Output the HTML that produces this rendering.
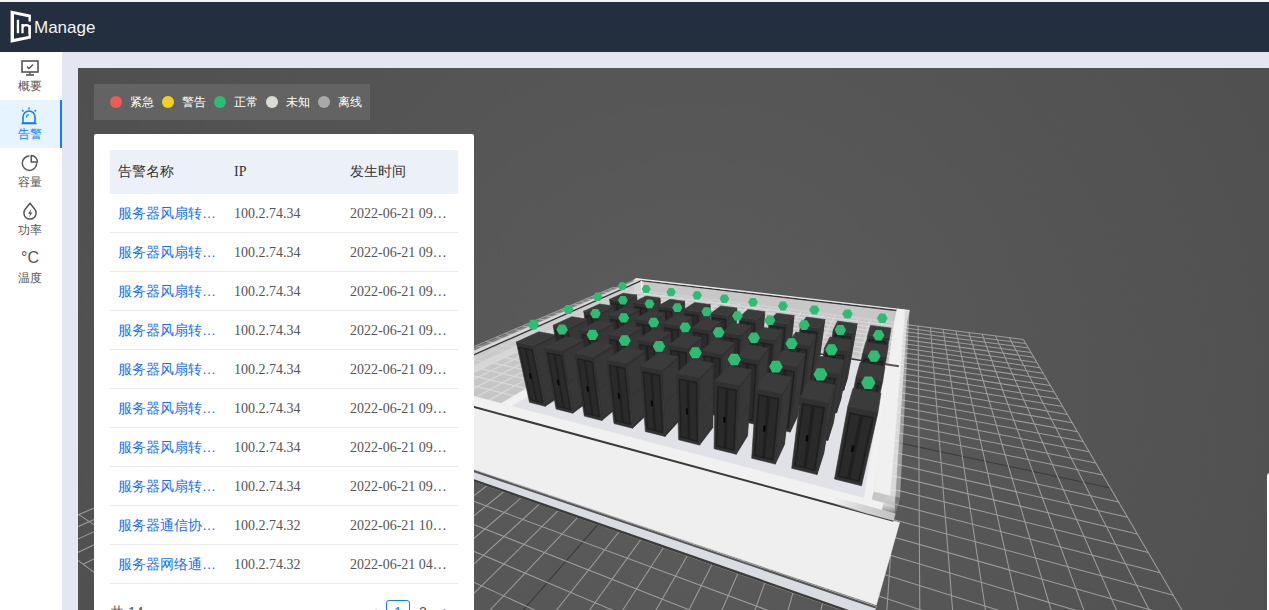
<!DOCTYPE html>
<html><head><meta charset="utf-8">
<style>
*{box-sizing:border-box;margin:0;padding:0}
html,body{width:1269px;height:610px;overflow:hidden;background:#e4e6f1;font-family:"Liberation Sans",sans-serif}
#topline{position:absolute;left:0;top:0;width:1269px;height:2px;background:#f4f4f4}
#header{position:absolute;left:0;top:2px;width:1269px;height:50px;background:#232e3e}
#side{position:absolute;left:0;top:52px;width:62px;height:558px;background:#fff}
.nav{position:absolute;left:0;width:62px;height:48px;color:#555;font-size:12px;text-align:center}
.nav.active{background:#e6f4ff;color:#1677ff}
.nav.active:after{content:"";position:absolute;right:0;top:0;width:2px;height:48px;background:#1677ff}
.nav svg{position:absolute;left:20px;top:8px}
.nav span{position:absolute;left:0;width:60px;top:26px;line-height:16px}
#scene{position:absolute;left:78px;top:68px;width:1191px;height:542px;overflow:hidden;background:#555}
#legend{position:absolute;left:94px;top:84px;width:276px;height:36px;background:#626362;color:#fff;font-size:12px}
.lg{position:absolute;top:0;height:36px;line-height:36px}
.dot{position:absolute;top:12px;width:12px;height:12px;border-radius:6px}
#panel{position:absolute;left:94px;top:134px;width:380px;height:500px;background:#fff;border-radius:2px}
table{position:absolute;left:16px;top:16px;width:348px;border-collapse:separate;border-spacing:0;table-layout:fixed}
th{height:44px;background:#ecf0f8;font-weight:normal;text-align:left;padding:0 8px;font-size:14px;color:#333;font-family:"Liberation Serif",serif}
td{height:39px;border-bottom:1px solid #ebebeb;padding:2px 8px 0;font-size:14px;color:#555;font-family:"Liberation Serif",serif;white-space:nowrap;overflow:hidden;text-overflow:ellipsis}
td.l{color:#1a6ff0;font-family:"Liberation Sans",sans-serif}
#pager{position:absolute;left:16px;top:466px;width:348px;height:24px;font-size:14px;color:#555}
</style></head><body>
<div id="topline"></div>
<div id="header">
 <svg width="40" height="50" style="position:absolute;left:0;top:-2px" viewBox="0 0 40 50">
  <path fill="#fff" fill-rule="evenodd" d="M10.6 10.6 L30.9 14.8 L30.9 38.4 L10.6 42.7 Z M14 14.3 L28.5 17.3 L28.5 35.9 L14 38.8 Z"/>
  <rect x="28" y="21.6" width="3.5" height="3.6" fill="#232e3e"/>
  <rect x="16.8" y="19.8" width="2.3" height="13.4" fill="#fff"/>
  <path d="M22.5 33.2 V24 M22.5 28.2 Q22.5 25.1 25.9 25.1 Q29.7 25.1 29.7 28.6 V34" fill="none" stroke="#fff" stroke-width="2.3"/>
 </svg>
 <div style="position:absolute;left:34px;top:16px;font-size:17px;line-height:20px;color:#f4f4f4;white-space:nowrap">Manage</div>
</div>
<div id="side">
 <div class="nav" style="top:0">
  <svg width="20" height="18" viewBox="0 0 20 18"><rect x="2" y="1" width="16" height="11" fill="none" stroke="#555" stroke-width="1.6"/><path d="M7 6.5 L9 8.5 L13 4.5" fill="none" stroke="#555" stroke-width="1.4"/><path d="M6 15 H14" stroke="#555" stroke-width="1.6"/><path d="M10 12 V15" stroke="#555" stroke-width="1.4"/></svg>
  <span>概要</span></div>
 <div class="nav active" style="top:48px">
  <svg width="20" height="18" viewBox="0 0 20 18" style="left:19px;top:6.5px"><path d="M4 16 V10 A6 6 0 0 1 16 10 V16 Z" fill="none" stroke="#1677ff" stroke-width="1.6"/><path d="M2.5 16.5 H17.5" stroke="#1677ff" stroke-width="1.6"/><path d="M10 0.5 V2.5 M3 3 L4.5 4.5 M17 3 L15.5 4.5" stroke="#1677ff" stroke-width="1.4"/><path d="M7.5 10.5 A3 3 0 0 1 10 7.5" fill="none" stroke="#1677ff" stroke-width="1.2"/></svg>
  <span>告警</span></div>
 <div class="nav" style="top:96px">
  <svg width="20" height="20" viewBox="0 0 20 20" style="left:20px;top:5px"><path d="M9.5 3 A7.2 7.2 0 1 0 16.7 10.2" fill="none" stroke="#555" stroke-width="1.5"/><path d="M11.2 2.6 A6.3 6.3 0 0 1 17.5 8.9 H11.2 Z" fill="none" stroke="#555" stroke-width="1.5" stroke-linejoin="round"/></svg>
  <span>容量</span></div>
 <div class="nav" style="top:144px">
  <svg width="20" height="20" viewBox="0 0 20 20" style="left:20px;top:5px"><path d="M10 2.2 L14.6 8 A6.1 6.1 0 1 1 5.4 8 Z" fill="none" stroke="#555" stroke-width="1.5" stroke-linejoin="round"/><path d="M11.3 8 L8 12.8 H10.1 L9.1 16.2 L12.4 11.4 H10.3 Z" fill="#555"/></svg>
  <span>功率</span></div>
 <div class="nav" style="top:192px">
  <div style="position:absolute;left:0;width:60px;top:5px;font-size:16px;line-height:18px;color:#555">°C</div>
  <span>温度</span></div>
</div>
<div id="scene"><svg id="s3d" width="1191" height="542" viewBox="78 68 1191 542" style="position:absolute;left:0;top:0"><defs><radialGradient id="bg" cx="690" cy="400" r="700" gradientUnits="userSpaceOnUse"><stop offset="0" stop-color="#5c5c5c"/><stop offset="1" stop-color="#4f4f4f"/></radialGradient><linearGradient id="endg" x1="0" y1="0" x2="0" y2="1"><stop offset="0" stop-color="#ffffff" stop-opacity="0"/><stop offset="1" stop-color="#6a6a6a" stop-opacity="0.85"/></linearGradient><linearGradient id="endh" x1="0" y1="0" x2="1" y2="0"><stop offset="0" stop-color="#d4d4d4" stop-opacity="0"/><stop offset="0.5" stop-color="#d2d2d2"/><stop offset="1" stop-color="#c2c2c2"/></linearGradient></defs><rect x="78" y="68" width="1191" height="542" fill="url(#bg)"/><line x1="612.9" y1="287.5" x2="39.2" y2="531.4" stroke="#9c9c9c" stroke-width="1.05" /><line x1="612.9" y1="287.5" x2="1023.4" y2="339.4" stroke="#9c9c9c" stroke-width="1.05" /><line x1="620.4" y1="288.5" x2="49.5" y2="539.1" stroke="#9c9c9c" stroke-width="1.05" /><line x1="607.9" y1="289.7" x2="1025.8" y2="343.6" stroke="#9c9c9c" stroke-width="1.05" /><line x1="628.0" y1="289.4" x2="60.2" y2="547.1" stroke="#9c9c9c" stroke-width="1.05" /><line x1="602.7" y1="291.9" x2="1028.4" y2="347.9" stroke="#9c9c9c" stroke-width="1.05" /><line x1="635.7" y1="290.4" x2="71.4" y2="555.4" stroke="#9c9c9c" stroke-width="1.05" /><line x1="597.3" y1="294.2" x2="1031.1" y2="352.5" stroke="#9c9c9c" stroke-width="1.05" /><line x1="643.6" y1="291.4" x2="83.1" y2="564.2" stroke="#9c9c9c" stroke-width="1.05" /><line x1="591.7" y1="296.6" x2="1033.9" y2="357.3" stroke="#9c9c9c" stroke-width="1.05" /><line x1="651.5" y1="292.4" x2="95.3" y2="573.2" stroke="#9c9c9c" stroke-width="1.05" /><line x1="585.9" y1="299.0" x2="1036.8" y2="362.4" stroke="#9c9c9c" stroke-width="1.05" /><line x1="659.5" y1="293.4" x2="108.0" y2="582.8" stroke="#9c9c9c" stroke-width="1.05" /><line x1="579.9" y1="301.6" x2="1040.0" y2="367.7" stroke="#9c9c9c" stroke-width="1.05" /><line x1="667.7" y1="294.4" x2="121.4" y2="592.7" stroke="#9c9c9c" stroke-width="1.05" /><line x1="573.6" y1="304.2" x2="1043.2" y2="373.3" stroke="#9c9c9c" stroke-width="1.05" /><line x1="675.9" y1="295.5" x2="135.3" y2="603.1" stroke="#9c9c9c" stroke-width="1.05" /><line x1="567.2" y1="307.0" x2="1046.7" y2="379.2" stroke="#9c9c9c" stroke-width="1.05" /><line x1="684.3" y1="296.5" x2="149.9" y2="614.0" stroke="#9c9c9c" stroke-width="1.05" /><line x1="560.5" y1="309.8" x2="1050.4" y2="385.5" stroke="#9c9c9c" stroke-width="1.05" /><line x1="692.9" y1="297.6" x2="165.3" y2="625.5" stroke="#9c9c9c" stroke-width="1.05" /><line x1="553.5" y1="312.8" x2="1054.2" y2="392.1" stroke="#9c9c9c" stroke-width="1.05" /><line x1="701.5" y1="298.7" x2="181.4" y2="637.5" stroke="#9c9c9c" stroke-width="1.05" /><line x1="546.3" y1="315.9" x2="1058.3" y2="399.1" stroke="#9c9c9c" stroke-width="1.05" /><line x1="710.3" y1="299.8" x2="198.4" y2="650.1" stroke="#9c9c9c" stroke-width="1.05" /><line x1="538.7" y1="319.1" x2="1062.7" y2="406.5" stroke="#9c9c9c" stroke-width="1.05" /><line x1="719.2" y1="301.0" x2="216.2" y2="663.5" stroke="#9c9c9c" stroke-width="1.05" /><line x1="530.9" y1="322.4" x2="1067.3" y2="414.4" stroke="#9c9c9c" stroke-width="1.05" /><line x1="728.2" y1="302.1" x2="235.1" y2="677.5" stroke="#9c9c9c" stroke-width="1.05" /><line x1="522.7" y1="325.9" x2="1072.2" y2="422.8" stroke="#9c9c9c" stroke-width="1.05" /><line x1="737.4" y1="303.3" x2="255.0" y2="692.4" stroke="#9c9c9c" stroke-width="1.05" /><line x1="514.2" y1="329.5" x2="1077.5" y2="431.8" stroke="#9c9c9c" stroke-width="1.05" /><line x1="746.7" y1="304.4" x2="276.1" y2="708.1" stroke="#9c9c9c" stroke-width="1.05" /><line x1="505.2" y1="333.3" x2="1083.2" y2="441.5" stroke="#9c9c9c" stroke-width="1.05" /><line x1="756.2" y1="305.6" x2="298.4" y2="724.7" stroke="#9c9c9c" stroke-width="1.05" /><line x1="495.9" y1="337.3" x2="1089.2" y2="451.8" stroke="#9c9c9c" stroke-width="1.05" /><line x1="765.8" y1="306.8" x2="322.1" y2="742.4" stroke="#9c9c9c" stroke-width="1.05" /><line x1="486.2" y1="341.4" x2="1095.7" y2="462.9" stroke="#9c9c9c" stroke-width="1.05" /><line x1="775.6" y1="308.1" x2="347.3" y2="761.2" stroke="#9c9c9c" stroke-width="1.05" /><line x1="476.0" y1="345.7" x2="1102.7" y2="474.9" stroke="#9c9c9c" stroke-width="1.05" /><line x1="785.5" y1="309.3" x2="374.1" y2="781.2" stroke="#3a3a3a" stroke-width="1.05" /><line x1="465.3" y1="350.3" x2="1110.3" y2="487.9" stroke="#3a3a3a" stroke-width="1.05" /><line x1="795.6" y1="310.6" x2="402.8" y2="802.6" stroke="#9c9c9c" stroke-width="1.05" /><line x1="454.0" y1="355.1" x2="1118.6" y2="502.0" stroke="#9c9c9c" stroke-width="1.05" /><line x1="805.8" y1="311.9" x2="433.5" y2="825.5" stroke="#9c9c9c" stroke-width="1.05" /><line x1="442.2" y1="360.1" x2="1127.6" y2="517.3" stroke="#9c9c9c" stroke-width="1.05" /><line x1="816.2" y1="313.2" x2="466.4" y2="850.1" stroke="#9c9c9c" stroke-width="1.05" /><line x1="429.8" y1="365.4" x2="1137.4" y2="534.1" stroke="#9c9c9c" stroke-width="1.05" /><line x1="826.8" y1="314.6" x2="501.8" y2="876.5" stroke="#9c9c9c" stroke-width="1.05" /><line x1="416.7" y1="370.9" x2="1148.2" y2="552.5" stroke="#9c9c9c" stroke-width="1.05" /><line x1="837.6" y1="315.9" x2="540.0" y2="905.0" stroke="#9c9c9c" stroke-width="1.05" /><line x1="402.9" y1="376.8" x2="1160.1" y2="572.8" stroke="#9c9c9c" stroke-width="1.05" /><line x1="848.5" y1="317.3" x2="581.3" y2="935.8" stroke="#9c9c9c" stroke-width="1.05" /><line x1="388.2" y1="383.0" x2="1173.3" y2="595.3" stroke="#9c9c9c" stroke-width="1.05" /><line x1="859.6" y1="318.7" x2="626.1" y2="969.2" stroke="#9c9c9c" stroke-width="1.05" /><line x1="372.8" y1="389.6" x2="1188.0" y2="620.5" stroke="#9c9c9c" stroke-width="1.05" /><line x1="871.0" y1="320.1" x2="675.0" y2="1005.6" stroke="#9c9c9c" stroke-width="1.05" /><line x1="356.4" y1="396.6" x2="1204.5" y2="648.6" stroke="#9c9c9c" stroke-width="1.05" /><line x1="882.5" y1="321.6" x2="728.3" y2="1045.4" stroke="#9c9c9c" stroke-width="1.05" /><line x1="339.0" y1="404.0" x2="1223.1" y2="680.5" stroke="#9c9c9c" stroke-width="1.05" /><line x1="894.2" y1="323.1" x2="786.9" y2="1089.1" stroke="#9c9c9c" stroke-width="1.05" /><line x1="320.5" y1="411.8" x2="1244.4" y2="716.7" stroke="#9c9c9c" stroke-width="1.05" /><line x1="906.1" y1="324.6" x2="851.4" y2="1137.2" stroke="#9c9c9c" stroke-width="1.05" /><line x1="300.7" y1="420.2" x2="1268.7" y2="758.4" stroke="#9c9c9c" stroke-width="1.05" /><line x1="918.2" y1="326.1" x2="923.0" y2="1190.6" stroke="#9c9c9c" stroke-width="1.05" /><line x1="279.6" y1="429.2" x2="1297.1" y2="806.7" stroke="#9c9c9c" stroke-width="1.05" /><line x1="930.5" y1="327.7" x2="1002.7" y2="1250.1" stroke="#9c9c9c" stroke-width="1.05" /><line x1="257.0" y1="438.8" x2="1330.4" y2="863.6" stroke="#9c9c9c" stroke-width="1.05" /><line x1="943.1" y1="329.2" x2="1092.1" y2="1316.7" stroke="#9c9c9c" stroke-width="1.05" /><line x1="232.7" y1="449.1" x2="1370.1" y2="931.4" stroke="#9c9c9c" stroke-width="1.05" /><line x1="955.9" y1="330.9" x2="1193.0" y2="1392.0" stroke="#9c9c9c" stroke-width="1.05" /><line x1="206.6" y1="460.2" x2="1418.2" y2="1013.5" stroke="#9c9c9c" stroke-width="1.05" /><line x1="968.9" y1="332.5" x2="1307.9" y2="1477.7" stroke="#9c9c9c" stroke-width="1.05" /><line x1="178.4" y1="472.2" x2="1477.8" y2="1115.3" stroke="#9c9c9c" stroke-width="1.05" /><line x1="982.1" y1="334.2" x2="1439.8" y2="1576.1" stroke="#9c9c9c" stroke-width="1.05" /><line x1="147.9" y1="485.1" x2="1553.4" y2="1244.5" stroke="#9c9c9c" stroke-width="1.05" /><line x1="995.6" y1="335.9" x2="1592.8" y2="1690.2" stroke="#9c9c9c" stroke-width="1.05" /><line x1="114.8" y1="499.2" x2="1652.7" y2="1414.0" stroke="#9c9c9c" stroke-width="1.05" /><line x1="1009.4" y1="337.6" x2="1772.5" y2="1824.2" stroke="#9c9c9c" stroke-width="1.05" /><line x1="78.7" y1="514.6" x2="1788.7" y2="1646.2" stroke="#9c9c9c" stroke-width="1.05" /><line x1="1023.4" y1="339.4" x2="1986.4" y2="1983.8" stroke="#9c9c9c" stroke-width="1.05" /><line x1="39.2" y1="531.4" x2="1986.4" y2="1983.8" stroke="#9c9c9c" stroke-width="1.05" /><polygon points="347.5,437.0 872.0,620.5 876.2,606.3 342.2,425.7" fill="#d9dce2" stroke="#d9dce2" stroke-width="0.6" stroke-linejoin="round" /><line x1="347.2" y1="436.2" x2="872.3" y2="619.5" stroke="#3c3c3c" stroke-width="2.5" /><line x1="342.7" y1="426.6" x2="875.8" y2="607.5" stroke="#555555" stroke-width="2" /><polygon points="416.2,391.3 899.6,522.4 876.3,605.0 343.2,425.2" fill="#efefef" stroke="#efefef" stroke-width="0.6" stroke-linejoin="round" /><polygon points="636.3,289.7 906.4,323.7 893.5,520.7 418.3,391.8" fill="#c6c6c6" stroke="#c6c6c6" stroke-width="0.6" stroke-linejoin="round" /><line x1="641.8" y1="290.4" x2="426.2" y2="394.0" stroke="#dadada" stroke-width="1.2" /><line x1="650.1" y1="291.5" x2="438.2" y2="397.2" stroke="#dadada" stroke-width="1.2" /><line x1="658.6" y1="292.5" x2="450.5" y2="400.6" stroke="#dadada" stroke-width="1.2" /><line x1="667.1" y1="293.6" x2="463.2" y2="404.0" stroke="#dadada" stroke-width="1.2" /><line x1="675.8" y1="294.7" x2="476.3" y2="407.5" stroke="#dadada" stroke-width="1.2" /><line x1="684.6" y1="295.8" x2="489.7" y2="411.2" stroke="#dadada" stroke-width="1.2" /><line x1="693.6" y1="296.9" x2="503.4" y2="414.9" stroke="#dadada" stroke-width="1.2" /><line x1="702.7" y1="298.1" x2="517.6" y2="418.8" stroke="#dadada" stroke-width="1.2" /><line x1="712.0" y1="299.3" x2="532.2" y2="422.7" stroke="#dadada" stroke-width="1.2" /><line x1="721.4" y1="300.4" x2="547.3" y2="426.8" stroke="#dadada" stroke-width="1.2" /><line x1="730.9" y1="301.6" x2="562.8" y2="431.0" stroke="#dadada" stroke-width="1.2" /><line x1="740.6" y1="302.9" x2="578.8" y2="435.4" stroke="#dadada" stroke-width="1.2" /><line x1="750.5" y1="304.1" x2="595.3" y2="439.8" stroke="#dadada" stroke-width="1.2" /><line x1="760.5" y1="305.3" x2="612.3" y2="444.4" stroke="#dadada" stroke-width="1.2" /><line x1="770.7" y1="306.6" x2="629.8" y2="449.2" stroke="#dadada" stroke-width="1.2" /><line x1="781.0" y1="307.9" x2="648.0" y2="454.1" stroke="#dadada" stroke-width="1.2" /><line x1="791.5" y1="309.3" x2="666.7" y2="459.2" stroke="#dadada" stroke-width="1.2" /><line x1="802.2" y1="310.6" x2="686.1" y2="464.5" stroke="#dadada" stroke-width="1.2" /><line x1="813.1" y1="312.0" x2="706.2" y2="469.9" stroke="#dadada" stroke-width="1.2" /><line x1="824.2" y1="313.4" x2="727.0" y2="475.6" stroke="#dadada" stroke-width="1.2" /><line x1="835.5" y1="314.8" x2="748.5" y2="481.4" stroke="#dadada" stroke-width="1.2" /><line x1="846.9" y1="316.2" x2="770.8" y2="487.4" stroke="#dadada" stroke-width="1.2" /><line x1="858.6" y1="317.7" x2="793.9" y2="493.7" stroke="#dadada" stroke-width="1.2" /><line x1="870.5" y1="319.2" x2="817.9" y2="500.2" stroke="#dadada" stroke-width="1.2" /><line x1="882.6" y1="320.7" x2="842.8" y2="507.0" stroke="#dadada" stroke-width="1.2" /><line x1="894.9" y1="322.2" x2="868.8" y2="514.0" stroke="#dadada" stroke-width="1.2" /><line x1="636.2" y1="289.8" x2="906.4" y2="323.8" stroke="#dadada" stroke-width="1.2" /><line x1="631.2" y1="292.1" x2="906.2" y2="327.5" stroke="#dadada" stroke-width="1.2" /><line x1="626.0" y1="294.6" x2="905.9" y2="331.3" stroke="#dadada" stroke-width="1.2" /><line x1="620.6" y1="297.1" x2="905.7" y2="335.4" stroke="#dadada" stroke-width="1.2" /><line x1="615.0" y1="299.7" x2="905.4" y2="339.6" stroke="#dadada" stroke-width="1.2" /><line x1="609.2" y1="302.4" x2="905.1" y2="344.1" stroke="#dadada" stroke-width="1.2" /><line x1="603.1" y1="305.3" x2="904.8" y2="348.7" stroke="#dadada" stroke-width="1.2" /><line x1="596.9" y1="308.2" x2="904.5" y2="353.6" stroke="#dadada" stroke-width="1.2" /><line x1="590.3" y1="311.3" x2="904.1" y2="358.8" stroke="#dadada" stroke-width="1.2" /><line x1="583.5" y1="314.5" x2="903.8" y2="364.3" stroke="#dadada" stroke-width="1.2" /><line x1="576.4" y1="317.8" x2="903.4" y2="370.0" stroke="#dadada" stroke-width="1.2" /><line x1="569.0" y1="321.3" x2="903.0" y2="376.1" stroke="#dadada" stroke-width="1.2" /><line x1="561.2" y1="324.9" x2="902.6" y2="382.5" stroke="#dadada" stroke-width="1.2" /><line x1="553.1" y1="328.7" x2="902.1" y2="389.4" stroke="#dadada" stroke-width="1.2" /><line x1="544.7" y1="332.7" x2="901.7" y2="396.7" stroke="#dadada" stroke-width="1.2" /><line x1="535.8" y1="336.8" x2="901.1" y2="404.4" stroke="#dadada" stroke-width="1.2" /><line x1="526.5" y1="341.2" x2="900.6" y2="412.7" stroke="#dadada" stroke-width="1.2" /><line x1="516.7" y1="345.7" x2="900.0" y2="421.5" stroke="#dadada" stroke-width="1.2" /><line x1="506.4" y1="350.6" x2="899.4" y2="431.0" stroke="#dadada" stroke-width="1.2" /><line x1="495.6" y1="355.6" x2="898.7" y2="441.1" stroke="#dadada" stroke-width="1.2" /><line x1="484.2" y1="361.0" x2="898.0" y2="452.1" stroke="#dadada" stroke-width="1.2" /><line x1="472.2" y1="366.6" x2="897.2" y2="464.0" stroke="#dadada" stroke-width="1.2" /><line x1="459.5" y1="372.6" x2="896.4" y2="476.8" stroke="#dadada" stroke-width="1.2" /><line x1="446.0" y1="378.9" x2="895.5" y2="490.8" stroke="#dadada" stroke-width="1.2" /><line x1="431.7" y1="385.6" x2="894.5" y2="506.0" stroke="#dadada" stroke-width="1.2" /><polygon points="642.6,326.0 885.1,364.2 864.1,498.1 511.2,406.3" fill="#e0e2e7" stroke="#e0e2e7" stroke-width="0.6" stroke-linejoin="round" /><line x1="642.6" y1="326.0" x2="885.1" y2="364.2" stroke="#3a3a3a" stroke-width="1.5" /><polygon points="431.7,385.6 894.5,506.0 893.5,520.7 418.3,391.8" fill="#f1f1f1" stroke="#f1f1f1" stroke-width="0.6" stroke-linejoin="round" /><polygon points="634.7,324.7 642.6,326.0 511.2,406.3 501.0,403.6" fill="#f1f1f1" stroke="#f1f1f1" stroke-width="0.6" stroke-linejoin="round" /><polygon points="885.1,364.2 888.8,364.8 870.2,499.7 864.1,498.1" fill="#f1f1f1" stroke="#f1f1f1" stroke-width="0.6" stroke-linejoin="round" /><line x1="418.3" y1="391.8" x2="893.5" y2="520.7" stroke="#3a3a3a" stroke-width="2" /><polygon points="634.2,290.7 906.3,325.2 909.4,311.9 633.4,279.7" fill="rgba(205,205,205,0.95)" /><polygon points="644.1,290.7 429.5,394.9 423.5,377.2 643.4,279.7" fill="rgba(215,215,215,0.9)" /><polygon points="635.5,278.7 909.5,310.5 909.4,311.9 633.4,279.7" fill="rgba(235,235,235,0.9)" /><polygon points="635.5,278.7 639.0,279.2 417.1,375.6 412.1,374.3" fill="rgba(235,235,235,0.30)" /><polygon points="639.0,279.2 643.4,279.7 423.5,377.2 417.1,375.6" fill="#d8d8d8" stroke="#d8d8d8" stroke-width="0.6" stroke-linejoin="round" /><line x1="641.3" y1="280.6" x2="897.2" y2="310.5" stroke="#383838" stroke-width="1.4" /><line x1="641.3" y1="280.6" x2="423.5" y2="377.2" stroke="#383838" stroke-width="1.4" /><line x1="635.5" y1="278.7" x2="909.5" y2="310.5" stroke="#ececec" stroke-width="1.2" /><line x1="642.1" y1="291.7" x2="641.3" y2="280.6" stroke="#f2f2f2" stroke-width="1.6" /><polygon points="894.5,322.2 868.0,513.8 873.4,491.2 897.4,309.1" fill="#f2f2f2" stroke="#f2f2f2" stroke-width="0.6" stroke-linejoin="round" /><polygon points="897.4,309.1 905.0,310.0 890.1,495.4 873.4,491.2" fill="#f0f0f0" stroke="#f0f0f0" stroke-width="0.6" stroke-linejoin="round" /><polygon points="905.0,310.0 909.5,310.5 900.0,497.9 890.1,495.4" fill="rgba(240,240,240,0.45)" /><polygon points="832.8,504.2 893.5,520.7 895.6,513.4 834.1,497.1" fill="url(#endh)" /><polygon points="881.9,509.8 895.6,513.4 900.0,497.9 885.9,494.4" fill="url(#endg)" /><line x1="877.4" y1="363.0" x2="898.8" y2="366.3" stroke="#555555" stroke-width="2" /><polygon points="628.0,351.1 640.2,343.0 636.6,294.9 623.6,301.3" fill="#303030" stroke="#303030" stroke-width="0.6" stroke-linejoin="round" /><polygon points="624.5,303.0 636.1,297.3 637.8,319.5 626.5,326.0" fill="#373737" stroke="#373737" stroke-width="0.6" stroke-linejoin="round" /><polygon points="626.6,327.0 637.9,320.4 639.4,341.5 628.5,348.8" fill="#373737" stroke="#373737" stroke-width="0.6" stroke-linejoin="round" /><polygon points="614.7,348.6 628.0,351.1 623.6,301.3 609.6,299.3" fill="#313131" stroke="#313131" stroke-width="0.6" stroke-linejoin="round" /><polygon points="611.3,303.2 616.7,303.9 621.0,347.5 615.8,346.5" fill="#1f1f1f" stroke="#1f1f1f" stroke-width="0.6" stroke-linejoin="round" /><polygon points="617.0,304.0 622.5,304.7 626.5,348.5 621.2,347.5" fill="#1f1f1f" stroke="#1f1f1f" stroke-width="0.6" stroke-linejoin="round" /><polygon points="612.3,304.3 616.0,304.9 620.1,346.4 616.5,345.7" fill="#2a2a2a" stroke="#2a2a2a" stroke-width="0.6" stroke-linejoin="round" /><polygon points="618.0,305.1 621.8,305.7 625.6,347.4 621.9,346.7" fill="#2a2a2a" stroke="#2a2a2a" stroke-width="0.6" stroke-linejoin="round" /><polygon points="617.5,324.6 618.4,324.7 618.7,328.6 617.9,328.5" fill="#050505" stroke="#050505" stroke-width="0.6" stroke-linejoin="round" /><polygon points="623.0,293.2 636.6,294.9 623.6,301.3 609.6,299.3" fill="#3b3b3b" stroke="#3b3b3b" stroke-width="0.6" stroke-linejoin="round" /><polygon points="651.0,355.3 662.4,346.8 660.1,298.0 647.9,304.6" fill="#303030" stroke="#303030" stroke-width="0.6" stroke-linejoin="round" /><polygon points="648.7,306.4 659.6,300.4 660.7,323.0 650.1,329.8" fill="#373737" stroke="#373737" stroke-width="0.6" stroke-linejoin="round" /><polygon points="650.2,330.8 660.8,323.9 661.8,345.4 651.5,352.9" fill="#373737" stroke="#373737" stroke-width="0.6" stroke-linejoin="round" /><polygon points="637.2,352.7 651.0,355.3 647.9,304.6 633.2,302.6" fill="#313131" stroke="#313131" stroke-width="0.6" stroke-linejoin="round" /><polygon points="635.0,306.5 640.6,307.3 643.7,351.6 638.3,350.6" fill="#1f1f1f" stroke="#1f1f1f" stroke-width="0.6" stroke-linejoin="round" /><polygon points="640.9,307.3 646.7,308.2 649.5,352.6 644.0,351.6" fill="#1f1f1f" stroke="#1f1f1f" stroke-width="0.6" stroke-linejoin="round" /><polygon points="635.9,307.7 639.8,308.2 642.8,350.5 639.1,349.8" fill="#2a2a2a" stroke="#2a2a2a" stroke-width="0.6" stroke-linejoin="round" /><polygon points="641.9,308.5 645.8,309.1 648.6,351.5 644.8,350.8" fill="#2a2a2a" stroke="#2a2a2a" stroke-width="0.6" stroke-linejoin="round" /><polygon points="640.8,328.3 641.7,328.4 642.0,332.4 641.1,332.3" fill="#050505" stroke="#050505" stroke-width="0.6" stroke-linejoin="round" /><polygon points="645.9,296.1 660.1,298.0 647.9,304.6 633.2,302.6" fill="#3b3b3b" stroke="#3b3b3b" stroke-width="0.6" stroke-linejoin="round" /><polygon points="675.0,359.6 685.6,350.8 684.6,301.2 673.3,308.1" fill="#303030" stroke="#303030" stroke-width="0.6" stroke-linejoin="round" /><polygon points="674.0,309.9 684.1,303.6 684.6,326.6 674.7,333.7" fill="#373737" stroke="#373737" stroke-width="0.6" stroke-linejoin="round" /><polygon points="674.8,334.7 684.6,327.6 685.1,349.4 675.5,357.2" fill="#373737" stroke="#373737" stroke-width="0.6" stroke-linejoin="round" /><polygon points="660.6,357.0 675.0,359.6 673.3,308.1 658.0,306.0" fill="#313131" stroke="#313131" stroke-width="0.6" stroke-linejoin="round" /><polygon points="659.7,310.0 665.6,310.8 667.5,355.9 661.9,354.8" fill="#1f1f1f" stroke="#1f1f1f" stroke-width="0.6" stroke-linejoin="round" /><polygon points="665.9,310.9 671.9,311.7 673.5,356.9 667.8,355.9" fill="#1f1f1f" stroke="#1f1f1f" stroke-width="0.6" stroke-linejoin="round" /><polygon points="660.6,311.2 664.7,311.8 666.6,354.7 662.7,354.0" fill="#2a2a2a" stroke="#2a2a2a" stroke-width="0.6" stroke-linejoin="round" /><polygon points="666.9,312.1 671.0,312.7 672.6,355.8 668.6,355.1" fill="#2a2a2a" stroke="#2a2a2a" stroke-width="0.6" stroke-linejoin="round" /><polygon points="665.2,332.2 666.1,332.3 666.2,336.4 665.3,336.3" fill="#050505" stroke="#050505" stroke-width="0.6" stroke-linejoin="round" /><polygon points="669.8,299.3 684.6,301.2 673.3,308.1 658.0,306.0" fill="#3b3b3b" stroke="#3b3b3b" stroke-width="0.6" stroke-linejoin="round" /><polygon points="700.1,364.2 709.8,355.0 710.2,304.5 699.9,311.8" fill="#303030" stroke="#303030" stroke-width="0.6" stroke-linejoin="round" /><polygon points="700.4,313.6 709.6,307.0 709.5,330.4 700.5,337.8" fill="#373737" stroke="#373737" stroke-width="0.6" stroke-linejoin="round" /><polygon points="700.5,338.9 709.5,331.4 709.3,353.5 700.6,361.7" fill="#373737" stroke="#373737" stroke-width="0.6" stroke-linejoin="round" /><polygon points="685.0,361.4 700.1,364.2 699.9,311.8 683.8,309.6" fill="#313131" stroke="#313131" stroke-width="0.6" stroke-linejoin="round" /><polygon points="685.5,313.6 691.7,314.5 692.3,360.3 686.4,359.3" fill="#1f1f1f" stroke="#1f1f1f" stroke-width="0.6" stroke-linejoin="round" /><polygon points="692.0,314.5 698.3,315.4 698.5,361.4 692.6,360.4" fill="#1f1f1f" stroke="#1f1f1f" stroke-width="0.6" stroke-linejoin="round" /><polygon points="686.5,314.9 690.7,315.5 691.4,359.2 687.3,358.4" fill="#2a2a2a" stroke="#2a2a2a" stroke-width="0.6" stroke-linejoin="round" /><polygon points="693.0,315.8 697.3,316.4 697.6,360.3 693.5,359.6" fill="#2a2a2a" stroke="#2a2a2a" stroke-width="0.6" stroke-linejoin="round" /><polygon points="690.6,336.2 691.5,336.4 691.6,340.5 690.6,340.4" fill="#050505" stroke="#050505" stroke-width="0.6" stroke-linejoin="round" /><polygon points="694.7,302.5 710.2,304.5 699.9,311.8 683.8,309.6" fill="#3b3b3b" stroke="#3b3b3b" stroke-width="0.6" stroke-linejoin="round" /><polygon points="604.9,366.5 619.0,357.1 613.8,306.0 598.6,313.5" fill="#303030" stroke="#303030" stroke-width="0.6" stroke-linejoin="round" /><polygon points="599.6,315.3 613.3,308.6 615.7,332.2 602.5,339.8" fill="#373737" stroke="#373737" stroke-width="0.6" stroke-linejoin="round" /><polygon points="602.6,340.9 615.8,333.2 618.1,355.6 605.4,364.0" fill="#373737" stroke="#373737" stroke-width="0.6" stroke-linejoin="round" /><polygon points="590.8,363.7 604.9,366.5 598.6,313.5 583.7,311.2" fill="#313131" stroke="#313131" stroke-width="0.6" stroke-linejoin="round" /><polygon points="585.7,315.3 591.4,316.2 597.3,362.6 591.8,361.5" fill="#1f1f1f" stroke="#1f1f1f" stroke-width="0.6" stroke-linejoin="round" /><polygon points="591.7,316.3 597.5,317.2 603.1,363.7 597.6,362.6" fill="#1f1f1f" stroke="#1f1f1f" stroke-width="0.6" stroke-linejoin="round" /><polygon points="586.7,316.6 590.7,317.2 596.3,361.4 592.5,360.7" fill="#2a2a2a" stroke="#2a2a2a" stroke-width="0.6" stroke-linejoin="round" /><polygon points="592.8,317.5 596.8,318.1 602.2,362.6 598.3,361.8" fill="#2a2a2a" stroke="#2a2a2a" stroke-width="0.6" stroke-linejoin="round" /><polygon points="592.9,338.2 593.8,338.4 594.4,342.6 593.5,342.4" fill="#050505" stroke="#050505" stroke-width="0.6" stroke-linejoin="round" /><polygon points="599.5,304.0 613.8,306.0 598.6,313.5 583.7,311.2" fill="#3b3b3b" stroke="#3b3b3b" stroke-width="0.6" stroke-linejoin="round" /><polygon points="726.2,369.0 734.9,359.4 736.9,308.0 727.7,315.6" fill="#303030" stroke="#303030" stroke-width="0.6" stroke-linejoin="round" /><polygon points="728.1,317.5 736.4,310.5 735.5,334.4 727.4,342.1" fill="#373737" stroke="#373737" stroke-width="0.6" stroke-linejoin="round" /><polygon points="727.4,343.2 735.4,335.4 734.6,357.9 726.7,366.5" fill="#373737" stroke="#373737" stroke-width="0.6" stroke-linejoin="round" /><polygon points="710.4,366.1 726.2,369.0 727.7,315.6 710.9,313.3" fill="#313131" stroke="#313131" stroke-width="0.6" stroke-linejoin="round" /><polygon points="712.5,317.4 719.0,318.4 718.2,365.0 712.0,363.9" fill="#1f1f1f" stroke="#1f1f1f" stroke-width="0.6" stroke-linejoin="round" /><polygon points="719.3,318.4 725.9,319.3 724.7,366.2 718.5,365.0" fill="#1f1f1f" stroke="#1f1f1f" stroke-width="0.6" stroke-linejoin="round" /><polygon points="713.5,318.7 718.0,319.3 717.2,363.8 713.0,363.1" fill="#2a2a2a" stroke="#2a2a2a" stroke-width="0.6" stroke-linejoin="round" /><polygon points="720.3,319.7 724.9,320.3 723.8,365.0 719.5,364.2" fill="#2a2a2a" stroke="#2a2a2a" stroke-width="0.6" stroke-linejoin="round" /><polygon points="717.1,340.5 718.1,340.6 718.0,344.9 717.1,344.7" fill="#050505" stroke="#050505" stroke-width="0.6" stroke-linejoin="round" /><polygon points="720.7,305.9 736.9,308.0 727.7,315.6 710.9,313.3" fill="#3b3b3b" stroke="#3b3b3b" stroke-width="0.6" stroke-linejoin="round" /><polygon points="629.2,371.4 642.5,361.6 638.7,309.6 624.4,317.4" fill="#303030" stroke="#303030" stroke-width="0.6" stroke-linejoin="round" /><polygon points="625.3,319.3 638.2,312.2 640.0,336.3 627.6,344.3" fill="#373737" stroke="#373737" stroke-width="0.6" stroke-linejoin="round" /><polygon points="627.7,345.3 640.1,337.3 641.7,360.1 629.7,368.9" fill="#373737" stroke="#373737" stroke-width="0.6" stroke-linejoin="round" /><polygon points="614.5,368.4 629.2,371.4 624.4,317.4 608.8,315.0" fill="#313131" stroke="#313131" stroke-width="0.6" stroke-linejoin="round" /><polygon points="610.7,319.2 616.8,320.2 621.4,367.4 615.7,366.2" fill="#1f1f1f" stroke="#1f1f1f" stroke-width="0.6" stroke-linejoin="round" /><polygon points="617.1,320.2 623.2,321.2 627.5,368.6 621.7,367.4" fill="#1f1f1f" stroke="#1f1f1f" stroke-width="0.6" stroke-linejoin="round" /><polygon points="611.8,320.5 615.9,321.2 620.4,366.2 616.5,365.4" fill="#2a2a2a" stroke="#2a2a2a" stroke-width="0.6" stroke-linejoin="round" /><polygon points="618.1,321.5 622.3,322.2 626.5,367.4 622.5,366.6" fill="#2a2a2a" stroke="#2a2a2a" stroke-width="0.6" stroke-linejoin="round" /><polygon points="617.6,342.6 618.5,342.7 619.0,347.0 618.1,346.8" fill="#050505" stroke="#050505" stroke-width="0.6" stroke-linejoin="round" /><polygon points="623.7,307.4 638.7,309.6 624.4,317.4 608.8,315.0" fill="#3b3b3b" stroke="#3b3b3b" stroke-width="0.6" stroke-linejoin="round" /><polygon points="753.6,374.0 761.2,363.9 764.8,311.7 756.9,319.6" fill="#303030" stroke="#303030" stroke-width="0.6" stroke-linejoin="round" /><polygon points="757.2,321.5 764.3,314.3 762.6,338.5 755.6,346.6" fill="#373737" stroke="#373737" stroke-width="0.6" stroke-linejoin="round" /><polygon points="755.6,347.7 762.6,339.5 761.0,362.4 754.1,371.4" fill="#373737" stroke="#373737" stroke-width="0.6" stroke-linejoin="round" /><polygon points="737.1,370.9 753.6,374.0 756.9,319.6 739.3,317.2" fill="#313131" stroke="#313131" stroke-width="0.6" stroke-linejoin="round" /><polygon points="740.8,321.4 747.7,322.4 745.2,369.9 738.8,368.7" fill="#1f1f1f" stroke="#1f1f1f" stroke-width="0.6" stroke-linejoin="round" /><polygon points="748.0,322.4 754.9,323.4 752.1,371.1 745.6,369.9" fill="#1f1f1f" stroke="#1f1f1f" stroke-width="0.6" stroke-linejoin="round" /><polygon points="741.8,322.7 746.5,323.4 744.3,368.7 739.8,367.9" fill="#2a2a2a" stroke="#2a2a2a" stroke-width="0.6" stroke-linejoin="round" /><polygon points="749.0,323.7 753.8,324.4 751.1,369.9 746.6,369.1" fill="#2a2a2a" stroke="#2a2a2a" stroke-width="0.6" stroke-linejoin="round" /><polygon points="745.0,344.9 746.0,345.1 745.8,349.4 744.7,349.2" fill="#050505" stroke="#050505" stroke-width="0.6" stroke-linejoin="round" /><polygon points="748.0,309.4 764.8,311.7 756.9,319.6 739.3,317.2" fill="#3b3b3b" stroke="#3b3b3b" stroke-width="0.6" stroke-linejoin="round" /><polygon points="654.7,376.5 667.1,366.2 664.8,313.3 651.5,321.5" fill="#303030" stroke="#303030" stroke-width="0.6" stroke-linejoin="round" /><polygon points="652.3,323.4 664.3,316.0 665.4,340.5 653.8,348.9" fill="#373737" stroke="#373737" stroke-width="0.6" stroke-linejoin="round" /><polygon points="653.9,350.0 665.4,341.6 666.4,364.7 655.3,373.9" fill="#373737" stroke="#373737" stroke-width="0.6" stroke-linejoin="round" /><polygon points="639.3,373.4 654.7,376.5 651.5,321.5 635.1,319.0" fill="#313131" stroke="#313131" stroke-width="0.6" stroke-linejoin="round" /><polygon points="637.0,323.3 643.3,324.3 646.6,372.4 640.7,371.2" fill="#1f1f1f" stroke="#1f1f1f" stroke-width="0.6" stroke-linejoin="round" /><polygon points="643.7,324.4 650.1,325.4 653.0,373.6 646.9,372.4" fill="#1f1f1f" stroke="#1f1f1f" stroke-width="0.6" stroke-linejoin="round" /><polygon points="638.1,324.6 642.4,325.3 645.6,371.1 641.5,370.3" fill="#2a2a2a" stroke="#2a2a2a" stroke-width="0.6" stroke-linejoin="round" /><polygon points="644.7,325.7 649.1,326.4 652.0,372.4 647.8,371.6" fill="#2a2a2a" stroke="#2a2a2a" stroke-width="0.6" stroke-linejoin="round" /><polygon points="643.5,347.1 644.4,347.3 644.8,351.7 643.8,351.5" fill="#050505" stroke="#050505" stroke-width="0.6" stroke-linejoin="round" /><polygon points="649.1,311.1 664.8,313.3 651.5,321.5 635.1,319.0" fill="#3b3b3b" stroke="#3b3b3b" stroke-width="0.6" stroke-linejoin="round" /><polygon points="782.2,379.2 788.6,368.7 794.1,315.5 787.6,323.9" fill="#303030" stroke="#303030" stroke-width="0.6" stroke-linejoin="round" /><polygon points="787.7,325.8 793.6,318.1 791.0,342.8 785.2,351.4" fill="#373737" stroke="#373737" stroke-width="0.6" stroke-linejoin="round" /><polygon points="785.1,352.5 790.9,343.9 788.5,367.2 782.7,376.6" fill="#373737" stroke="#373737" stroke-width="0.6" stroke-linejoin="round" /><polygon points="764.9,376.0 782.2,379.2 787.6,323.9 769.0,321.3" fill="#313131" stroke="#313131" stroke-width="0.6" stroke-linejoin="round" /><polygon points="770.6,325.6 777.7,326.6 773.6,375.0 766.8,373.8" fill="#1f1f1f" stroke="#1f1f1f" stroke-width="0.6" stroke-linejoin="round" /><polygon points="778.1,326.7 785.3,327.7 780.7,376.3 773.9,375.0" fill="#1f1f1f" stroke="#1f1f1f" stroke-width="0.6" stroke-linejoin="round" /><polygon points="771.6,326.9 776.5,327.6 772.6,373.8 767.9,372.9" fill="#2a2a2a" stroke="#2a2a2a" stroke-width="0.6" stroke-linejoin="round" /><polygon points="779.1,328.0 784.1,328.7 779.8,375.0 775.0,374.2" fill="#2a2a2a" stroke="#2a2a2a" stroke-width="0.6" stroke-linejoin="round" /><polygon points="774.1,349.6 775.2,349.8 774.8,354.1 773.7,354.0" fill="#050505" stroke="#050505" stroke-width="0.6" stroke-linejoin="round" /><polygon points="776.4,313.2 794.1,315.5 787.6,323.9 769.0,321.3" fill="#3b3b3b" stroke="#3b3b3b" stroke-width="0.6" stroke-linejoin="round" /><polygon points="681.4,381.9 692.8,371.1 692.1,317.3 679.9,325.9" fill="#303030" stroke="#303030" stroke-width="0.6" stroke-linejoin="round" /><polygon points="680.6,327.8 691.6,320.0 691.9,345.0 681.3,353.7" fill="#373737" stroke="#373737" stroke-width="0.6" stroke-linejoin="round" /><polygon points="681.3,354.9 691.9,346.0 692.2,369.6 682.0,379.2" fill="#373737" stroke="#373737" stroke-width="0.6" stroke-linejoin="round" /><polygon points="665.3,378.6 681.4,381.9 679.9,325.9 662.7,323.2" fill="#313131" stroke="#313131" stroke-width="0.6" stroke-linejoin="round" /><polygon points="664.6,327.6 671.2,328.7 673.0,377.6 666.8,376.4" fill="#1f1f1f" stroke="#1f1f1f" stroke-width="0.6" stroke-linejoin="round" /><polygon points="671.6,328.7 678.3,329.8 679.7,378.9 673.4,377.7" fill="#1f1f1f" stroke="#1f1f1f" stroke-width="0.6" stroke-linejoin="round" /><polygon points="665.7,329.0 670.3,329.7 672.0,376.4 667.7,375.5" fill="#2a2a2a" stroke="#2a2a2a" stroke-width="0.6" stroke-linejoin="round" /><polygon points="672.7,330.1 677.3,330.8 678.7,377.7 674.3,376.8" fill="#2a2a2a" stroke="#2a2a2a" stroke-width="0.6" stroke-linejoin="round" /><polygon points="670.6,351.9 671.6,352.1 671.8,356.5 670.8,356.3" fill="#050505" stroke="#050505" stroke-width="0.6" stroke-linejoin="round" /><polygon points="675.6,314.9 692.1,317.3 679.9,325.9 662.7,323.2" fill="#3b3b3b" stroke="#3b3b3b" stroke-width="0.6" stroke-linejoin="round" /><polygon points="812.2,384.7 817.3,373.6 824.9,319.5 819.8,328.3" fill="#303030" stroke="#303030" stroke-width="0.6" stroke-linejoin="round" /><polygon points="819.7,330.2 824.3,322.2 820.8,347.4 816.2,356.3" fill="#373737" stroke="#373737" stroke-width="0.6" stroke-linejoin="round" /><polygon points="816.1,357.5 820.6,348.4 817.4,372.1 812.8,382.0" fill="#373737" stroke="#373737" stroke-width="0.6" stroke-linejoin="round" /><polygon points="794.1,381.3 812.2,384.7 819.8,328.3 800.3,325.6" fill="#313131" stroke="#313131" stroke-width="0.6" stroke-linejoin="round" /><polygon points="801.8,330.0 809.3,331.1 803.2,380.3 796.2,379.1" fill="#1f1f1f" stroke="#1f1f1f" stroke-width="0.6" stroke-linejoin="round" /><polygon points="809.7,331.1 817.3,332.2 810.7,381.7 803.6,380.4" fill="#1f1f1f" stroke="#1f1f1f" stroke-width="0.6" stroke-linejoin="round" /><polygon points="802.8,331.4 808.0,332.1 802.3,379.1 797.4,378.2" fill="#2a2a2a" stroke="#2a2a2a" stroke-width="0.6" stroke-linejoin="round" /><polygon points="810.7,332.5 815.9,333.2 809.8,380.4 804.8,379.5" fill="#2a2a2a" stroke="#2a2a2a" stroke-width="0.6" stroke-linejoin="round" /><polygon points="804.7,354.5 805.8,354.7 805.3,359.1 804.1,358.9" fill="#050505" stroke="#050505" stroke-width="0.6" stroke-linejoin="round" /><polygon points="806.3,317.1 824.9,319.5 819.8,328.3 800.3,325.6" fill="#3b3b3b" stroke="#3b3b3b" stroke-width="0.6" stroke-linejoin="round" /><polygon points="577.6,384.7 594.3,373.6 587.0,319.1 568.9,327.9" fill="#303030" stroke="#303030" stroke-width="0.6" stroke-linejoin="round" /><polygon points="570.2,329.9 586.5,321.8 589.9,347.1 574.2,356.2" fill="#373737" stroke="#373737" stroke-width="0.6" stroke-linejoin="round" /><polygon points="574.4,357.3 590.0,348.2 593.2,372.1 578.2,382.0" fill="#373737" stroke="#373737" stroke-width="0.6" stroke-linejoin="round" /><polygon points="562.7,381.3 577.6,384.7 568.9,327.9 553.1,325.3" fill="#313131" stroke="#313131" stroke-width="0.6" stroke-linejoin="round" /><polygon points="555.3,329.7 561.4,330.8 569.6,380.3 563.8,379.0" fill="#1f1f1f" stroke="#1f1f1f" stroke-width="0.6" stroke-linejoin="round" /><polygon points="561.8,330.8 567.9,331.9 575.7,381.7 569.9,380.4" fill="#1f1f1f" stroke="#1f1f1f" stroke-width="0.6" stroke-linejoin="round" /><polygon points="556.5,331.0 560.7,331.8 568.5,379.0 564.5,378.2" fill="#2a2a2a" stroke="#2a2a2a" stroke-width="0.6" stroke-linejoin="round" /><polygon points="562.9,332.2 567.2,332.9 574.6,380.4 570.6,379.5" fill="#2a2a2a" stroke="#2a2a2a" stroke-width="0.6" stroke-linejoin="round" /><polygon points="564.0,354.3 564.9,354.5 565.6,359.0 564.7,358.8" fill="#050505" stroke="#050505" stroke-width="0.6" stroke-linejoin="round" /><polygon points="571.8,316.7 587.0,319.1 568.9,327.9 553.1,325.3" fill="#3b3b3b" stroke="#3b3b3b" stroke-width="0.6" stroke-linejoin="round" /><polygon points="709.4,387.5 719.7,376.2 720.8,321.4 709.9,330.4" fill="#303030" stroke="#303030" stroke-width="0.6" stroke-linejoin="round" /><polygon points="710.4,332.4 720.2,324.1 719.7,349.6 710.2,358.8" fill="#373737" stroke="#373737" stroke-width="0.6" stroke-linejoin="round" /><polygon points="710.2,360.0 719.7,350.7 719.2,374.7 710.0,384.8" fill="#373737" stroke="#373737" stroke-width="0.6" stroke-linejoin="round" /><polygon points="692.5,384.1 709.4,387.5 709.9,330.4 691.8,327.7" fill="#313131" stroke="#313131" stroke-width="0.6" stroke-linejoin="round" /><polygon points="693.6,332.2 700.6,333.2 700.7,383.1 694.2,381.8" fill="#1f1f1f" stroke="#1f1f1f" stroke-width="0.6" stroke-linejoin="round" /><polygon points="701.0,333.3 708.0,334.4 707.7,384.5 701.1,383.2" fill="#1f1f1f" stroke="#1f1f1f" stroke-width="0.6" stroke-linejoin="round" /><polygon points="694.7,333.5 699.5,334.3 699.7,381.8 695.2,380.9" fill="#2a2a2a" stroke="#2a2a2a" stroke-width="0.6" stroke-linejoin="round" /><polygon points="702.0,334.7 706.9,335.4 706.7,383.2 702.1,382.3" fill="#2a2a2a" stroke="#2a2a2a" stroke-width="0.6" stroke-linejoin="round" /><polygon points="699.1,356.9 700.1,357.1 700.2,361.6 699.1,361.4" fill="#050505" stroke="#050505" stroke-width="0.6" stroke-linejoin="round" /><polygon points="703.5,318.9 720.8,321.4 709.9,330.4 691.8,327.7" fill="#3b3b3b" stroke="#3b3b3b" stroke-width="0.6" stroke-linejoin="round" /><polygon points="843.7,390.4 847.3,378.8 857.1,323.7 853.7,333.0" fill="#303030" stroke="#303030" stroke-width="0.6" stroke-linejoin="round" /><polygon points="853.5,334.9 856.5,326.5 852.0,352.1 848.8,361.5" fill="#373737" stroke="#373737" stroke-width="0.6" stroke-linejoin="round" /><polygon points="848.6,362.7 851.8,353.2 847.5,377.3 844.2,387.6" fill="#373737" stroke="#373737" stroke-width="0.6" stroke-linejoin="round" /><polygon points="824.7,386.9 843.7,390.4 853.7,333.0 833.2,330.1" fill="#313131" stroke="#313131" stroke-width="0.6" stroke-linejoin="round" /><polygon points="834.6,334.7 842.5,335.8 834.3,385.9 826.9,384.6" fill="#1f1f1f" stroke="#1f1f1f" stroke-width="0.6" stroke-linejoin="round" /><polygon points="842.9,335.8 850.9,337.0 842.2,387.4 834.7,386.0" fill="#1f1f1f" stroke="#1f1f1f" stroke-width="0.6" stroke-linejoin="round" /><polygon points="835.6,336.0 841.1,336.8 833.4,384.7 828.2,383.7" fill="#2a2a2a" stroke="#2a2a2a" stroke-width="0.6" stroke-linejoin="round" /><polygon points="843.9,337.2 849.5,338.0 841.2,386.1 836.1,385.1" fill="#2a2a2a" stroke="#2a2a2a" stroke-width="0.6" stroke-linejoin="round" /><polygon points="836.8,359.6 838.0,359.8 837.2,364.4 836.1,364.2" fill="#050505" stroke="#050505" stroke-width="0.6" stroke-linejoin="round" /><polygon points="837.6,321.1 857.1,323.7 853.7,333.0 833.2,330.1" fill="#3b3b3b" stroke="#3b3b3b" stroke-width="0.6" stroke-linejoin="round" /><polygon points="603.5,390.4 619.2,378.8 613.5,323.3 596.4,332.6" fill="#303030" stroke="#303030" stroke-width="0.6" stroke-linejoin="round" /><polygon points="597.6,334.6 612.9,326.1 615.6,351.9 600.9,361.4" fill="#373737" stroke="#373737" stroke-width="0.6" stroke-linejoin="round" /><polygon points="601.0,362.6 615.7,353.0 618.3,377.3 604.1,387.7" fill="#373737" stroke="#373737" stroke-width="0.6" stroke-linejoin="round" /><polygon points="587.9,386.9 603.5,390.4 596.4,332.6 579.7,329.8" fill="#313131" stroke="#313131" stroke-width="0.6" stroke-linejoin="round" /><polygon points="582.0,334.3 588.4,335.5 595.1,385.9 589.0,384.6" fill="#1f1f1f" stroke="#1f1f1f" stroke-width="0.6" stroke-linejoin="round" /><polygon points="588.7,335.5 595.2,336.7 601.6,387.4 595.4,386.0" fill="#1f1f1f" stroke="#1f1f1f" stroke-width="0.6" stroke-linejoin="round" /><polygon points="583.1,335.7 587.6,336.5 594.0,384.7 589.8,383.7" fill="#2a2a2a" stroke="#2a2a2a" stroke-width="0.6" stroke-linejoin="round" /><polygon points="589.9,336.9 594.4,337.7 600.5,386.1 596.2,385.1" fill="#2a2a2a" stroke="#2a2a2a" stroke-width="0.6" stroke-linejoin="round" /><polygon points="590.2,359.5 591.1,359.7 591.8,364.2 590.8,364.0" fill="#050505" stroke="#050505" stroke-width="0.6" stroke-linejoin="round" /><polygon points="597.5,320.8 613.5,323.3 596.4,332.6 579.7,329.8" fill="#3b3b3b" stroke="#3b3b3b" stroke-width="0.6" stroke-linejoin="round" /><polygon points="738.8,393.4 747.8,381.5 750.9,325.7 741.4,335.2" fill="#303030" stroke="#303030" stroke-width="0.6" stroke-linejoin="round" /><polygon points="741.8,337.2 750.3,328.5 748.9,354.5 740.6,364.2" fill="#373737" stroke="#373737" stroke-width="0.6" stroke-linejoin="round" /><polygon points="740.5,365.3 748.9,355.6 747.5,380.0 739.4,390.6" fill="#373737" stroke="#373737" stroke-width="0.6" stroke-linejoin="round" /><polygon points="721.1,389.8 738.8,393.4 741.4,335.2 722.3,332.3" fill="#313131" stroke="#313131" stroke-width="0.6" stroke-linejoin="round" /><polygon points="724.1,336.9 731.5,338.1 729.8,388.9 722.9,387.5" fill="#1f1f1f" stroke="#1f1f1f" stroke-width="0.6" stroke-linejoin="round" /><polygon points="731.9,338.1 739.3,339.3 737.1,390.3 730.2,388.9" fill="#1f1f1f" stroke="#1f1f1f" stroke-width="0.6" stroke-linejoin="round" /><polygon points="725.2,338.3 730.3,339.1 728.8,387.6 724.0,386.6" fill="#2a2a2a" stroke="#2a2a2a" stroke-width="0.6" stroke-linejoin="round" /><polygon points="733.0,339.5 738.1,340.3 736.1,389.0 731.3,388.1" fill="#2a2a2a" stroke="#2a2a2a" stroke-width="0.6" stroke-linejoin="round" /><polygon points="729.0,362.2 730.1,362.4 730.0,367.0 728.9,366.8" fill="#050505" stroke="#050505" stroke-width="0.6" stroke-linejoin="round" /><polygon points="732.7,323.1 750.9,325.7 741.4,335.2 722.3,332.3" fill="#3b3b3b" stroke="#3b3b3b" stroke-width="0.6" stroke-linejoin="round" /><polygon points="856.8,392.8 876.7,396.4 889.5,337.9 867.8,334.9" fill="#313131" stroke="#313131" stroke-width="0.6" stroke-linejoin="round" /><polygon points="869.1,339.5 877.5,340.7 867.0,391.8 859.3,390.4" fill="#1f1f1f" stroke="#1f1f1f" stroke-width="0.6" stroke-linejoin="round" /><polygon points="877.9,340.8 886.3,342.0 875.3,393.3 867.4,391.9" fill="#1f1f1f" stroke="#1f1f1f" stroke-width="0.6" stroke-linejoin="round" /><polygon points="870.2,340.9 875.9,341.8 866.0,390.5 860.7,389.6" fill="#2a2a2a" stroke="#2a2a2a" stroke-width="0.6" stroke-linejoin="round" /><polygon points="878.9,342.2 884.8,343.0 874.3,392.0 868.9,391.0" fill="#2a2a2a" stroke="#2a2a2a" stroke-width="0.6" stroke-linejoin="round" /><polygon points="870.6,365.0 871.8,365.2 870.9,369.8 869.6,369.6" fill="#050505" stroke="#050505" stroke-width="0.6" stroke-linejoin="round" /><polygon points="870.5,325.4 891.0,328.1 889.5,337.9 867.8,334.9" fill="#3b3b3b" stroke="#3b3b3b" stroke-width="0.6" stroke-linejoin="round" /><polygon points="630.7,396.5 645.4,384.3 641.4,327.7 625.4,337.6" fill="#303030" stroke="#303030" stroke-width="0.6" stroke-linejoin="round" /><polygon points="626.4,339.6 640.8,330.6 642.7,356.9 628.9,366.9" fill="#373737" stroke="#373737" stroke-width="0.6" stroke-linejoin="round" /><polygon points="629.0,368.1 642.8,358.1 644.5,382.7 631.3,393.7" fill="#373737" stroke="#373737" stroke-width="0.6" stroke-linejoin="round" /><polygon points="614.3,392.8 630.7,396.5 625.4,337.6 607.8,334.6" fill="#313131" stroke="#313131" stroke-width="0.6" stroke-linejoin="round" /><polygon points="610.0,339.2 616.8,340.4 622.0,391.9 615.6,390.5" fill="#1f1f1f" stroke="#1f1f1f" stroke-width="0.6" stroke-linejoin="round" /><polygon points="617.1,340.5 624.0,341.7 628.8,393.4 622.3,391.9" fill="#1f1f1f" stroke="#1f1f1f" stroke-width="0.6" stroke-linejoin="round" /><polygon points="611.2,340.7 615.9,341.5 620.9,390.6 616.5,389.6" fill="#2a2a2a" stroke="#2a2a2a" stroke-width="0.6" stroke-linejoin="round" /><polygon points="618.3,341.9 623.0,342.7 627.7,392.1 623.2,391.1" fill="#2a2a2a" stroke="#2a2a2a" stroke-width="0.6" stroke-linejoin="round" /><polygon points="617.8,364.9 618.8,365.1 619.3,369.8 618.2,369.6" fill="#050505" stroke="#050505" stroke-width="0.6" stroke-linejoin="round" /><polygon points="624.5,325.1 641.4,327.7 625.4,337.6 607.8,334.6" fill="#3b3b3b" stroke="#3b3b3b" stroke-width="0.6" stroke-linejoin="round" /><polygon points="769.7,399.6 777.4,387.1 782.6,330.2 774.7,340.3" fill="#303030" stroke="#303030" stroke-width="0.6" stroke-linejoin="round" /><polygon points="774.9,342.3 782.0,333.1 779.6,359.6 772.6,369.8" fill="#373737" stroke="#373737" stroke-width="0.6" stroke-linejoin="round" /><polygon points="772.5,371.0 779.5,360.7 777.2,385.6 770.3,396.7" fill="#373737" stroke="#373737" stroke-width="0.6" stroke-linejoin="round" /><polygon points="751.1,395.9 769.7,399.6 774.7,340.3 754.6,337.2" fill="#313131" stroke="#313131" stroke-width="0.6" stroke-linejoin="round" /><polygon points="756.3,341.9 764.0,343.1 760.3,394.9 753.1,393.5" fill="#1f1f1f" stroke="#1f1f1f" stroke-width="0.6" stroke-linejoin="round" /><polygon points="764.4,343.2 772.3,344.4 768.1,396.5 760.7,395.0" fill="#1f1f1f" stroke="#1f1f1f" stroke-width="0.6" stroke-linejoin="round" /><polygon points="757.4,343.4 762.8,344.2 759.3,393.6 754.2,392.6" fill="#2a2a2a" stroke="#2a2a2a" stroke-width="0.6" stroke-linejoin="round" /><polygon points="765.5,344.6 771.0,345.5 767.0,395.1 761.9,394.1" fill="#2a2a2a" stroke="#2a2a2a" stroke-width="0.6" stroke-linejoin="round" /><polygon points="760.5,367.8 761.7,368.0 761.3,372.7 760.2,372.5" fill="#050505" stroke="#050505" stroke-width="0.6" stroke-linejoin="round" /><polygon points="763.4,327.5 782.6,330.2 774.7,340.3 754.6,337.2" fill="#3b3b3b" stroke="#3b3b3b" stroke-width="0.6" stroke-linejoin="round" /><polygon points="659.3,402.9 672.8,390.0 670.7,332.4 656.0,342.8" fill="#303030" stroke="#303030" stroke-width="0.6" stroke-linejoin="round" /><polygon points="656.9,344.8 670.1,335.4 671.1,362.2 658.4,372.7" fill="#373737" stroke="#373737" stroke-width="0.6" stroke-linejoin="round" /><polygon points="658.5,373.9 671.1,363.4 672.1,388.5 659.9,400.0" fill="#373737" stroke="#373737" stroke-width="0.6" stroke-linejoin="round" /><polygon points="642.0,399.0 659.3,402.9 656.0,342.8 637.4,339.6" fill="#313131" stroke="#313131" stroke-width="0.6" stroke-linejoin="round" /><polygon points="639.6,344.4 646.7,345.7 650.2,398.1 643.5,396.6" fill="#1f1f1f" stroke="#1f1f1f" stroke-width="0.6" stroke-linejoin="round" /><polygon points="647.1,345.7 654.3,347.0 657.4,399.7 650.6,398.2" fill="#1f1f1f" stroke="#1f1f1f" stroke-width="0.6" stroke-linejoin="round" /><polygon points="640.8,345.9 645.7,346.7 649.1,396.8 644.4,395.7" fill="#2a2a2a" stroke="#2a2a2a" stroke-width="0.6" stroke-linejoin="round" /><polygon points="648.3,347.2 653.3,348.1 656.3,398.3 651.5,397.3" fill="#2a2a2a" stroke="#2a2a2a" stroke-width="0.6" stroke-linejoin="round" /><polygon points="646.8,370.6 647.9,370.8 648.2,375.6 647.1,375.4" fill="#050505" stroke="#050505" stroke-width="0.6" stroke-linejoin="round" /><polygon points="652.9,329.6 670.7,332.4 656.0,342.8 637.4,339.6" fill="#3b3b3b" stroke="#3b3b3b" stroke-width="0.6" stroke-linejoin="round" /><polygon points="802.2,406.1 808.3,393.0 816.0,335.0 809.9,345.7" fill="#303030" stroke="#303030" stroke-width="0.6" stroke-linejoin="round" /><polygon points="809.9,347.7 815.3,338.0 811.8,365.0 806.3,375.8" fill="#373737" stroke="#373737" stroke-width="0.6" stroke-linejoin="round" /><polygon points="806.2,377.0 811.7,366.2 808.3,391.4 802.9,403.2" fill="#373737" stroke="#373737" stroke-width="0.6" stroke-linejoin="round" /><polygon points="782.6,402.2 802.2,406.1 809.9,345.7 788.6,342.4" fill="#313131" stroke="#313131" stroke-width="0.6" stroke-linejoin="round" /><polygon points="790.2,347.2 798.4,348.5 792.5,401.3 784.8,399.8" fill="#1f1f1f" stroke="#1f1f1f" stroke-width="0.6" stroke-linejoin="round" /><polygon points="798.8,348.6 807.1,349.9 800.6,402.9 792.9,401.4" fill="#1f1f1f" stroke="#1f1f1f" stroke-width="0.6" stroke-linejoin="round" /><polygon points="791.3,348.7 797.0,349.6 791.4,399.9 786.1,398.9" fill="#2a2a2a" stroke="#2a2a2a" stroke-width="0.6" stroke-linejoin="round" /><polygon points="800.0,350.0 805.7,350.9 799.5,401.5 794.2,400.5" fill="#2a2a2a" stroke="#2a2a2a" stroke-width="0.6" stroke-linejoin="round" /><polygon points="793.7,373.6 794.9,373.8 794.4,378.6 793.2,378.4" fill="#050505" stroke="#050505" stroke-width="0.6" stroke-linejoin="round" /><polygon points="795.8,332.1 816.0,335.0 809.9,345.7 788.6,342.4" fill="#3b3b3b" stroke="#3b3b3b" stroke-width="0.6" stroke-linejoin="round" /><polygon points="545.2,406.3 565.1,393.0 555.0,334.7 533.1,345.4" fill="#303030" stroke="#303030" stroke-width="0.6" stroke-linejoin="round" /><polygon points="534.7,347.4 554.4,337.7 559.1,364.9 540.4,375.7" fill="#373737" stroke="#373737" stroke-width="0.6" stroke-linejoin="round" /><polygon points="540.6,376.9 559.3,366.0 563.8,391.5 545.8,403.3" fill="#373737" stroke="#373737" stroke-width="0.6" stroke-linejoin="round" /><polygon points="529.5,402.3 545.2,406.3 533.1,345.4 516.3,342.1" fill="#313131" stroke="#313131" stroke-width="0.6" stroke-linejoin="round" /><polygon points="518.9,347.0 525.4,348.3 536.5,401.4 530.4,399.9" fill="#1f1f1f" stroke="#1f1f1f" stroke-width="0.6" stroke-linejoin="round" /><polygon points="525.7,348.3 532.3,349.6 543.1,403.0 536.9,401.5" fill="#1f1f1f" stroke="#1f1f1f" stroke-width="0.6" stroke-linejoin="round" /><polygon points="520.2,348.4 524.6,349.3 535.3,400.0 531.1,399.0" fill="#2a2a2a" stroke="#2a2a2a" stroke-width="0.6" stroke-linejoin="round" /><polygon points="527.0,349.8 531.5,350.7 541.9,401.7 537.6,400.6" fill="#2a2a2a" stroke="#2a2a2a" stroke-width="0.6" stroke-linejoin="round" /><polygon points="529.3,373.5 530.3,373.8 531.3,378.6 530.3,378.4" fill="#050505" stroke="#050505" stroke-width="0.6" stroke-linejoin="round" /><polygon points="538.8,331.8 555.0,334.7 533.1,345.4 516.3,342.1" fill="#3b3b3b" stroke="#3b3b3b" stroke-width="0.6" stroke-linejoin="round" /><polygon points="689.4,409.6 701.7,396.1 701.6,337.3 688.3,348.3" fill="#303030" stroke="#303030" stroke-width="0.6" stroke-linejoin="round" /><polygon points="689.1,350.4 700.9,340.4 701.0,367.7 689.6,378.8" fill="#373737" stroke="#373737" stroke-width="0.6" stroke-linejoin="round" /><polygon points="689.6,380.1 701.0,368.9 701.1,394.5 690.0,406.6" fill="#373737" stroke="#373737" stroke-width="0.6" stroke-linejoin="round" /><polygon points="671.2,405.5 689.4,409.6 688.3,348.3 668.7,345.0" fill="#313131" stroke="#313131" stroke-width="0.6" stroke-linejoin="round" /><polygon points="670.8,349.9 678.4,351.2 680.0,404.7 672.9,403.1" fill="#1f1f1f" stroke="#1f1f1f" stroke-width="0.6" stroke-linejoin="round" /><polygon points="678.8,351.2 686.4,352.6 687.5,406.3 680.3,404.8" fill="#1f1f1f" stroke="#1f1f1f" stroke-width="0.6" stroke-linejoin="round" /><polygon points="672.0,351.4 677.3,352.3 678.8,403.3 673.9,402.2" fill="#2a2a2a" stroke="#2a2a2a" stroke-width="0.6" stroke-linejoin="round" /><polygon points="680.0,352.7 685.3,353.7 686.4,404.9 681.4,403.9" fill="#2a2a2a" stroke="#2a2a2a" stroke-width="0.6" stroke-linejoin="round" /><polygon points="677.5,376.6 678.6,376.9 678.7,381.7 677.6,381.5" fill="#050505" stroke="#050505" stroke-width="0.6" stroke-linejoin="round" /><polygon points="682.9,334.4 701.6,337.3 688.3,348.3 668.7,345.0" fill="#3b3b3b" stroke="#3b3b3b" stroke-width="0.6" stroke-linejoin="round" /><polygon points="836.5,413.0 840.9,399.2 851.1,340.0 847.0,351.3" fill="#303030" stroke="#303030" stroke-width="0.6" stroke-linejoin="round" /><polygon points="846.8,353.4 850.5,343.1 845.7,370.7 841.9,382.1" fill="#373737" stroke="#373737" stroke-width="0.6" stroke-linejoin="round" /><polygon points="841.7,383.3 845.5,371.9 841.1,397.6 837.1,410.0" fill="#373737" stroke="#373737" stroke-width="0.6" stroke-linejoin="round" /><polygon points="815.8,408.8 836.5,413.0 847.0,351.3 824.5,347.9" fill="#313131" stroke="#313131" stroke-width="0.6" stroke-linejoin="round" /><polygon points="826.1,352.8 834.7,354.2 826.3,408.0 818.2,406.4" fill="#1f1f1f" stroke="#1f1f1f" stroke-width="0.6" stroke-linejoin="round" /><polygon points="835.2,354.2 844.0,355.6 834.9,409.7 826.7,408.1" fill="#1f1f1f" stroke="#1f1f1f" stroke-width="0.6" stroke-linejoin="round" /><polygon points="827.2,354.3 833.2,355.3 825.2,406.6 819.7,405.5" fill="#2a2a2a" stroke="#2a2a2a" stroke-width="0.6" stroke-linejoin="round" /><polygon points="836.3,355.7 842.4,356.7 833.8,408.3 828.2,407.2" fill="#2a2a2a" stroke="#2a2a2a" stroke-width="0.6" stroke-linejoin="round" /><polygon points="828.7,379.8 830.0,380.0 829.3,384.9 828.0,384.7" fill="#050505" stroke="#050505" stroke-width="0.6" stroke-linejoin="round" /><polygon points="829.9,337.0 851.1,340.0 847.0,351.3 824.5,347.9" fill="#3b3b3b" stroke="#3b3b3b" stroke-width="0.6" stroke-linejoin="round" /><polygon points="572.8,413.2 591.6,399.2 583.3,339.8 562.4,351.1" fill="#303030" stroke="#303030" stroke-width="0.6" stroke-linejoin="round" /><polygon points="564.0,353.2 582.6,342.8 586.6,370.6 568.7,382.0" fill="#373737" stroke="#373737" stroke-width="0.6" stroke-linejoin="round" /><polygon points="568.9,383.3 586.7,371.8 590.4,397.7 573.4,410.2" fill="#373737" stroke="#373737" stroke-width="0.6" stroke-linejoin="round" /><polygon points="556.1,409.0 572.8,413.2 562.4,351.1 544.6,347.6" fill="#313131" stroke="#313131" stroke-width="0.6" stroke-linejoin="round" /><polygon points="547.2,352.6 554.1,354.0 563.7,408.2 557.2,406.6" fill="#1f1f1f" stroke="#1f1f1f" stroke-width="0.6" stroke-linejoin="round" /><polygon points="554.5,354.0 561.4,355.4 570.6,409.9 564.0,408.2" fill="#1f1f1f" stroke="#1f1f1f" stroke-width="0.6" stroke-linejoin="round" /><polygon points="548.5,354.1 553.3,355.1 562.5,406.8 558.0,405.6" fill="#2a2a2a" stroke="#2a2a2a" stroke-width="0.6" stroke-linejoin="round" /><polygon points="555.7,355.5 560.5,356.5 569.4,408.5 564.8,407.3" fill="#2a2a2a" stroke="#2a2a2a" stroke-width="0.6" stroke-linejoin="round" /><polygon points="557.2,379.8 558.2,380.0 559.1,384.9 558.1,384.7" fill="#050505" stroke="#050505" stroke-width="0.6" stroke-linejoin="round" /><polygon points="566.2,336.7 583.3,339.8 562.4,351.1 544.6,347.6" fill="#3b3b3b" stroke="#3b3b3b" stroke-width="0.6" stroke-linejoin="round" /><polygon points="721.2,416.7 732.0,402.4 734.2,342.5 722.6,354.2" fill="#303030" stroke="#303030" stroke-width="0.6" stroke-linejoin="round" /><polygon points="723.2,356.2 733.5,345.7 732.5,373.6 722.5,385.3" fill="#373737" stroke="#373737" stroke-width="0.6" stroke-linejoin="round" /><polygon points="722.4,386.6 732.5,374.8 731.6,400.9 721.8,413.6" fill="#373737" stroke="#373737" stroke-width="0.6" stroke-linejoin="round" /><polygon points="702.0,412.4 721.2,416.7 722.6,354.2 701.9,350.6" fill="#313131" stroke="#313131" stroke-width="0.6" stroke-linejoin="round" /><polygon points="703.9,355.6 711.9,357.0 711.3,411.6 703.8,409.9" fill="#1f1f1f" stroke="#1f1f1f" stroke-width="0.6" stroke-linejoin="round" /><polygon points="712.3,357.1 720.4,358.5 719.3,413.4 711.7,411.7" fill="#1f1f1f" stroke="#1f1f1f" stroke-width="0.6" stroke-linejoin="round" /><polygon points="705.1,357.2 710.6,358.1 710.2,410.2 705.0,409.0" fill="#2a2a2a" stroke="#2a2a2a" stroke-width="0.6" stroke-linejoin="round" /><polygon points="713.5,358.6 719.1,359.6 718.1,411.9 712.9,410.8" fill="#2a2a2a" stroke="#2a2a2a" stroke-width="0.6" stroke-linejoin="round" /><polygon points="709.8,383.0 711.0,383.2 711.0,388.2 709.8,388.0" fill="#050505" stroke="#050505" stroke-width="0.6" stroke-linejoin="round" /><polygon points="714.4,339.4 734.2,342.5 722.6,354.2 701.9,350.6" fill="#3b3b3b" stroke="#3b3b3b" stroke-width="0.6" stroke-linejoin="round" /><polygon points="850.8,415.9 872.7,420.3 886.5,357.3 862.6,353.7" fill="#313131" stroke="#313131" stroke-width="0.6" stroke-linejoin="round" /><polygon points="864.0,358.7 873.2,360.2 862.0,415.1 853.5,413.4" fill="#1f1f1f" stroke="#1f1f1f" stroke-width="0.6" stroke-linejoin="round" /><polygon points="873.7,360.2 883.0,361.7 871.1,416.9 862.5,415.2" fill="#1f1f1f" stroke="#1f1f1f" stroke-width="0.6" stroke-linejoin="round" /><polygon points="865.2,360.3 871.5,361.3 860.9,413.7 855.0,412.5" fill="#2a2a2a" stroke="#2a2a2a" stroke-width="0.6" stroke-linejoin="round" /><polygon points="874.8,361.8 881.3,362.8 870.0,415.5 864.0,414.3" fill="#2a2a2a" stroke="#2a2a2a" stroke-width="0.6" stroke-linejoin="round" /><polygon points="865.8,386.3 867.1,386.6 866.1,391.6 864.8,391.3" fill="#050505" stroke="#050505" stroke-width="0.6" stroke-linejoin="round" /><polygon points="865.8,342.2 888.3,345.4 886.5,357.3 862.6,353.7" fill="#3b3b3b" stroke="#3b3b3b" stroke-width="0.6" stroke-linejoin="round" /><polygon points="601.8,420.5 619.5,405.8 613.1,345.1 593.5,357.1" fill="#303030" stroke="#303030" stroke-width="0.6" stroke-linejoin="round" /><polygon points="594.9,359.2 612.5,348.3 615.5,376.6 598.8,388.7" fill="#373737" stroke="#373737" stroke-width="0.6" stroke-linejoin="round" /><polygon points="598.9,390.0 615.6,377.8 618.5,404.2 602.5,417.4" fill="#373737" stroke="#373737" stroke-width="0.6" stroke-linejoin="round" /><polygon points="584.3,416.1 601.8,420.5 593.5,357.1 574.7,353.5" fill="#313131" stroke="#313131" stroke-width="0.6" stroke-linejoin="round" /><polygon points="577.3,358.5 584.5,360.0 592.4,415.3 585.5,413.6" fill="#1f1f1f" stroke="#1f1f1f" stroke-width="0.6" stroke-linejoin="round" /><polygon points="584.9,360.1 592.3,361.5 599.7,417.1 592.7,415.4" fill="#1f1f1f" stroke="#1f1f1f" stroke-width="0.6" stroke-linejoin="round" /><polygon points="578.6,360.1 583.6,361.1 591.2,413.9 586.4,412.7" fill="#2a2a2a" stroke="#2a2a2a" stroke-width="0.6" stroke-linejoin="round" /><polygon points="586.2,361.6 591.3,362.6 598.4,415.7 593.6,414.5" fill="#2a2a2a" stroke="#2a2a2a" stroke-width="0.6" stroke-linejoin="round" /><polygon points="586.7,386.3 587.8,386.6 588.5,391.6 587.4,391.3" fill="#050505" stroke="#050505" stroke-width="0.6" stroke-linejoin="round" /><polygon points="595.1,341.9 613.1,345.1 593.5,357.1 574.7,353.5" fill="#3b3b3b" stroke="#3b3b3b" stroke-width="0.6" stroke-linejoin="round" /><polygon points="754.7,424.2 763.9,409.1 768.7,348.0 759.0,360.4" fill="#303030" stroke="#303030" stroke-width="0.6" stroke-linejoin="round" /><polygon points="759.3,362.5 768.0,351.2 765.8,379.7 757.3,392.2" fill="#373737" stroke="#373737" stroke-width="0.6" stroke-linejoin="round" /><polygon points="757.2,393.4 765.7,381.0 763.7,407.5 755.4,421.0" fill="#373737" stroke="#373737" stroke-width="0.6" stroke-linejoin="round" /><polygon points="734.4,419.6 754.7,424.2 759.0,360.4 737.0,356.6" fill="#313131" stroke="#313131" stroke-width="0.6" stroke-linejoin="round" /><polygon points="738.9,361.7 747.4,363.2 744.4,418.9 736.5,417.2" fill="#1f1f1f" stroke="#1f1f1f" stroke-width="0.6" stroke-linejoin="round" /><polygon points="747.8,363.3 756.4,364.8 752.8,420.8 744.8,419.0" fill="#1f1f1f" stroke="#1f1f1f" stroke-width="0.6" stroke-linejoin="round" /><polygon points="740.2,363.3 746.0,364.3 743.3,417.5 737.8,416.3" fill="#2a2a2a" stroke="#2a2a2a" stroke-width="0.6" stroke-linejoin="round" /><polygon points="749.1,364.9 755.0,365.9 751.7,419.3 746.1,418.1" fill="#2a2a2a" stroke="#2a2a2a" stroke-width="0.6" stroke-linejoin="round" /><polygon points="744.1,389.8 745.3,390.0 745.1,395.0 743.8,394.8" fill="#050505" stroke="#050505" stroke-width="0.6" stroke-linejoin="round" /><polygon points="747.8,344.7 768.7,348.0 759.0,360.4 737.0,356.6" fill="#3b3b3b" stroke="#3b3b3b" stroke-width="0.6" stroke-linejoin="round" /><polygon points="632.6,428.2 649.0,412.7 644.7,350.8 626.6,363.5" fill="#303030" stroke="#303030" stroke-width="0.6" stroke-linejoin="round" /><polygon points="627.8,365.7 644.0,354.0 646.1,383.0 630.6,395.8" fill="#373737" stroke="#373737" stroke-width="0.6" stroke-linejoin="round" /><polygon points="630.7,397.1 646.1,384.2 648.0,411.1 633.2,425.0" fill="#373737" stroke="#373737" stroke-width="0.6" stroke-linejoin="round" /><polygon points="614.0,423.6 632.6,428.2 626.6,363.5 606.6,359.7" fill="#313131" stroke="#313131" stroke-width="0.6" stroke-linejoin="round" /><polygon points="609.1,364.9 616.8,366.4 622.7,422.8 615.5,421.0" fill="#1f1f1f" stroke="#1f1f1f" stroke-width="0.6" stroke-linejoin="round" /><polygon points="617.2,366.5 625.0,368.0 630.4,424.8 623.1,422.9" fill="#1f1f1f" stroke="#1f1f1f" stroke-width="0.6" stroke-linejoin="round" /><polygon points="610.4,366.5 615.8,367.5 621.4,421.4 616.4,420.1" fill="#2a2a2a" stroke="#2a2a2a" stroke-width="0.6" stroke-linejoin="round" /><polygon points="618.5,368.1 624.0,369.2 629.1,423.3 624.1,422.0" fill="#2a2a2a" stroke="#2a2a2a" stroke-width="0.6" stroke-linejoin="round" /><polygon points="617.9,393.3 619.1,393.6 619.6,398.7 618.5,398.4" fill="#050505" stroke="#050505" stroke-width="0.6" stroke-linejoin="round" /><polygon points="625.6,347.3 644.7,350.8 626.6,363.5 606.6,359.7" fill="#3b3b3b" stroke="#3b3b3b" stroke-width="0.6" stroke-linejoin="round" /><polygon points="790.2,432.1 797.6,416.2 805.2,353.8 797.6,367.0" fill="#303030" stroke="#303030" stroke-width="0.6" stroke-linejoin="round" /><polygon points="797.7,369.1 804.5,357.2 801.0,386.3 794.2,399.4" fill="#373737" stroke="#373737" stroke-width="0.6" stroke-linejoin="round" /><polygon points="794.1,400.7 800.8,387.5 797.5,414.6 790.9,428.9" fill="#373737" stroke="#373737" stroke-width="0.6" stroke-linejoin="round" /><polygon points="768.7,427.3 790.2,432.1 797.6,367.0 774.2,363.0" fill="#313131" stroke="#313131" stroke-width="0.6" stroke-linejoin="round" /><polygon points="776.1,368.2 785.1,369.8 779.5,426.6 771.1,424.8" fill="#1f1f1f" stroke="#1f1f1f" stroke-width="0.6" stroke-linejoin="round" /><polygon points="785.6,369.9 794.7,371.5 788.4,428.6 779.9,426.7" fill="#1f1f1f" stroke="#1f1f1f" stroke-width="0.6" stroke-linejoin="round" /><polygon points="777.3,369.8 783.6,370.9 778.3,425.1 772.5,423.9" fill="#2a2a2a" stroke="#2a2a2a" stroke-width="0.6" stroke-linejoin="round" /><polygon points="786.8,371.5 793.1,372.6 787.2,427.1 781.3,425.8" fill="#2a2a2a" stroke="#2a2a2a" stroke-width="0.6" stroke-linejoin="round" /><polygon points="780.4,396.9 781.7,397.2 781.2,402.3 779.9,402.0" fill="#050505" stroke="#050505" stroke-width="0.6" stroke-linejoin="round" /><polygon points="783.1,350.3 805.2,353.8 797.6,367.0 774.2,363.0" fill="#3b3b3b" stroke="#3b3b3b" stroke-width="0.6" stroke-linejoin="round" /><polygon points="665.1,436.4 680.0,419.9 678.2,356.8 661.8,370.4" fill="#303030" stroke="#303030" stroke-width="0.6" stroke-linejoin="round" /><polygon points="662.8,372.5 677.5,360.1 678.4,389.7 664.3,403.3" fill="#373737" stroke="#373737" stroke-width="0.6" stroke-linejoin="round" /><polygon points="664.4,404.6 678.4,390.9 679.3,418.4 665.8,433.1" fill="#373737" stroke="#373737" stroke-width="0.6" stroke-linejoin="round" /><polygon points="645.4,431.5 665.1,436.4 661.8,370.4 640.5,366.2" fill="#313131" stroke="#313131" stroke-width="0.6" stroke-linejoin="round" /><polygon points="642.9,371.6 651.1,373.2 654.8,430.8 647.1,428.9" fill="#1f1f1f" stroke="#1f1f1f" stroke-width="0.6" stroke-linejoin="round" /><polygon points="651.6,373.3 659.9,374.9 662.9,432.9 655.2,430.9" fill="#1f1f1f" stroke="#1f1f1f" stroke-width="0.6" stroke-linejoin="round" /><polygon points="644.3,373.2 650.0,374.4 653.5,429.3 648.2,428.0" fill="#2a2a2a" stroke="#2a2a2a" stroke-width="0.6" stroke-linejoin="round" /><polygon points="652.9,374.9 658.7,376.1 661.7,431.3 656.3,430.0" fill="#2a2a2a" stroke="#2a2a2a" stroke-width="0.6" stroke-linejoin="round" /><polygon points="651.1,400.7 652.3,401.0 652.6,406.2 651.4,405.9" fill="#050505" stroke="#050505" stroke-width="0.6" stroke-linejoin="round" /><polygon points="657.9,353.1 678.2,356.8 661.8,370.4 640.5,366.2" fill="#3b3b3b" stroke="#3b3b3b" stroke-width="0.6" stroke-linejoin="round" /><polygon points="827.8,440.5 833.2,423.6 843.9,360.0 838.8,374.0" fill="#303030" stroke="#303030" stroke-width="0.6" stroke-linejoin="round" /><polygon points="838.6,376.1 843.2,363.4 838.2,393.2 833.5,407.2" fill="#373737" stroke="#373737" stroke-width="0.6" stroke-linejoin="round" /><polygon points="833.2,408.5 838.0,394.4 833.3,422.0 828.5,437.2" fill="#373737" stroke="#373737" stroke-width="0.6" stroke-linejoin="round" /><polygon points="805.0,435.4 827.8,440.5 838.8,374.0 813.9,369.7" fill="#313131" stroke="#313131" stroke-width="0.6" stroke-linejoin="round" /><polygon points="815.6,375.1 825.2,376.8 816.5,434.8 807.7,432.9" fill="#1f1f1f" stroke="#1f1f1f" stroke-width="0.6" stroke-linejoin="round" /><polygon points="825.7,376.9 835.5,378.6 826.0,436.9 817.0,434.9" fill="#1f1f1f" stroke="#1f1f1f" stroke-width="0.6" stroke-linejoin="round" /><polygon points="816.9,376.8 823.5,378.0 815.4,433.3 809.2,431.9" fill="#2a2a2a" stroke="#2a2a2a" stroke-width="0.6" stroke-linejoin="round" /><polygon points="827.0,378.6 833.7,379.7 824.8,435.4 818.6,434.0" fill="#2a2a2a" stroke="#2a2a2a" stroke-width="0.6" stroke-linejoin="round" /><polygon points="818.9,404.5 820.3,404.8 819.5,410.0 818.1,409.7" fill="#050505" stroke="#050505" stroke-width="0.6" stroke-linejoin="round" /><polygon points="820.4,356.3 843.9,360.0 838.8,374.0 813.9,369.7" fill="#3b3b3b" stroke="#3b3b3b" stroke-width="0.6" stroke-linejoin="round" /><polygon points="699.6,445.1 712.9,427.6 713.7,363.2 699.3,377.7" fill="#303030" stroke="#303030" stroke-width="0.6" stroke-linejoin="round" /><polygon points="700.1,379.8 713.0,366.6 712.6,396.8 700.2,411.3" fill="#373737" stroke="#373737" stroke-width="0.6" stroke-linejoin="round" /><polygon points="700.2,412.6 712.6,398.1 712.3,426.1 700.3,441.7" fill="#373737" stroke="#373737" stroke-width="0.6" stroke-linejoin="round" /><polygon points="678.7,439.8 699.6,445.1 699.3,377.7 676.6,373.2" fill="#313131" stroke="#313131" stroke-width="0.6" stroke-linejoin="round" /><polygon points="678.9,378.7 687.7,380.5 688.8,439.3 680.7,437.3" fill="#1f1f1f" stroke="#1f1f1f" stroke-width="0.6" stroke-linejoin="round" /><polygon points="688.1,380.5 697.0,382.3 697.5,441.5 689.2,439.4" fill="#1f1f1f" stroke="#1f1f1f" stroke-width="0.6" stroke-linejoin="round" /><polygon points="680.3,380.4 686.4,381.6 687.5,437.7 681.9,436.4" fill="#2a2a2a" stroke="#2a2a2a" stroke-width="0.6" stroke-linejoin="round" /><polygon points="689.5,382.3 695.7,383.5 696.2,439.9 690.5,438.5" fill="#2a2a2a" stroke="#2a2a2a" stroke-width="0.6" stroke-linejoin="round" /><polygon points="686.3,408.5 687.6,408.8 687.7,414.2 686.4,413.9" fill="#050505" stroke="#050505" stroke-width="0.6" stroke-linejoin="round" /><polygon points="692.2,359.3 713.7,363.2 699.3,377.7 676.6,373.2" fill="#3b3b3b" stroke="#3b3b3b" stroke-width="0.6" stroke-linejoin="round" /><polygon points="843.5,444.0 867.7,449.4 882.7,381.5 856.1,376.9" fill="#313131" stroke="#313131" stroke-width="0.6" stroke-linejoin="round" /><polygon points="857.7,382.5 868.0,384.3 855.9,443.5 846.5,441.4" fill="#1f1f1f" stroke="#1f1f1f" stroke-width="0.6" stroke-linejoin="round" /><polygon points="868.5,384.4 878.9,386.2 865.9,445.7 856.4,443.6" fill="#1f1f1f" stroke="#1f1f1f" stroke-width="0.6" stroke-linejoin="round" /><polygon points="859.0,384.2 866.1,385.4 854.7,441.9 848.2,440.5" fill="#2a2a2a" stroke="#2a2a2a" stroke-width="0.6" stroke-linejoin="round" /><polygon points="869.8,386.1 877.0,387.3 864.7,444.2 858.1,442.7" fill="#2a2a2a" stroke="#2a2a2a" stroke-width="0.6" stroke-linejoin="round" /><polygon points="859.8,412.5 861.4,412.8 860.3,418.2 858.8,417.9" fill="#050505" stroke="#050505" stroke-width="0.6" stroke-linejoin="round" /><polygon points="860.1,362.6 885.0,366.6 882.7,381.5 856.1,376.9" fill="#3b3b3b" stroke="#3b3b3b" stroke-width="0.6" stroke-linejoin="round" /><polygon points="736.3,454.3 747.6,435.8 751.5,369.9 739.4,385.4" fill="#303030" stroke="#303030" stroke-width="0.6" stroke-linejoin="round" /><polygon points="739.9,387.6 750.8,373.5 749.0,404.4 738.4,419.8" fill="#373737" stroke="#373737" stroke-width="0.6" stroke-linejoin="round" /><polygon points="738.4,421.2 748.9,405.7 747.2,434.2 737.0,450.8" fill="#373737" stroke="#373737" stroke-width="0.6" stroke-linejoin="round" /><polygon points="714.1,448.7 736.3,454.3 739.4,385.4 715.1,380.7" fill="#313131" stroke="#313131" stroke-width="0.6" stroke-linejoin="round" /><polygon points="717.4,386.3 726.7,388.2 724.9,448.3 716.3,446.2" fill="#1f1f1f" stroke="#1f1f1f" stroke-width="0.6" stroke-linejoin="round" /><polygon points="727.2,388.3 736.7,390.2 734.2,450.6 725.4,448.4" fill="#1f1f1f" stroke="#1f1f1f" stroke-width="0.6" stroke-linejoin="round" /><polygon points="718.8,388.1 725.2,389.4 723.6,446.7 717.7,445.2" fill="#2a2a2a" stroke="#2a2a2a" stroke-width="0.6" stroke-linejoin="round" /><polygon points="728.6,390.1 735.2,391.4 732.9,449.0 726.8,447.5" fill="#2a2a2a" stroke="#2a2a2a" stroke-width="0.6" stroke-linejoin="round" /><polygon points="723.8,416.9 725.2,417.2 725.0,422.6 723.6,422.3" fill="#050505" stroke="#050505" stroke-width="0.6" stroke-linejoin="round" /><polygon points="728.6,365.8 751.5,369.9 739.4,385.4 715.1,380.7" fill="#3b3b3b" stroke="#3b3b3b" stroke-width="0.6" stroke-linejoin="round" /><polygon points="775.3,464.1 784.5,444.4 791.8,377.2 782.3,393.8" fill="#303030" stroke="#303030" stroke-width="0.6" stroke-linejoin="round" /><polygon points="782.5,395.9 791.0,380.9 787.6,412.4 779.2,428.9" fill="#373737" stroke="#373737" stroke-width="0.6" stroke-linejoin="round" /><polygon points="779.1,430.3 787.5,413.8 784.3,442.8 776.1,460.5" fill="#373737" stroke="#373737" stroke-width="0.6" stroke-linejoin="round" /><polygon points="751.7,458.2 775.3,464.1 782.3,393.8 756.3,388.7" fill="#313131" stroke="#313131" stroke-width="0.6" stroke-linejoin="round" /><polygon points="758.4,394.5 768.4,396.5 763.4,457.9 754.2,455.6" fill="#1f1f1f" stroke="#1f1f1f" stroke-width="0.6" stroke-linejoin="round" /><polygon points="769.0,396.6 779.1,398.6 773.2,460.3 763.9,458.0" fill="#1f1f1f" stroke="#1f1f1f" stroke-width="0.6" stroke-linejoin="round" /><polygon points="759.9,396.3 766.8,397.7 762.1,456.2 755.7,454.7" fill="#2a2a2a" stroke="#2a2a2a" stroke-width="0.6" stroke-linejoin="round" /><polygon points="770.4,398.4 777.4,399.8 771.9,458.7 765.4,457.1" fill="#2a2a2a" stroke="#2a2a2a" stroke-width="0.6" stroke-linejoin="round" /><polygon points="763.8,425.8 765.3,426.1 764.8,431.7 763.3,431.4" fill="#050505" stroke="#050505" stroke-width="0.6" stroke-linejoin="round" /><polygon points="767.4,372.8 791.8,377.2 782.3,393.8 756.3,388.7" fill="#3b3b3b" stroke="#3b3b3b" stroke-width="0.6" stroke-linejoin="round" /><polygon points="817.0,474.6 823.7,453.6 834.8,384.9 828.4,402.7" fill="#303030" stroke="#303030" stroke-width="0.6" stroke-linejoin="round" /><polygon points="828.2,404.9 834.1,388.7 828.8,421.0 822.9,438.6" fill="#373737" stroke="#373737" stroke-width="0.6" stroke-linejoin="round" /><polygon points="822.7,440.0 828.6,422.3 823.8,452.0 817.8,470.9" fill="#373737" stroke="#373737" stroke-width="0.6" stroke-linejoin="round" /><polygon points="791.7,468.3 817.0,474.6 828.4,402.7 800.4,397.3" fill="#313131" stroke="#313131" stroke-width="0.6" stroke-linejoin="round" /><polygon points="802.5,403.2 813.2,405.4 804.4,468.1 794.6,465.6" fill="#1f1f1f" stroke="#1f1f1f" stroke-width="0.6" stroke-linejoin="round" /><polygon points="813.7,405.5 824.7,407.6 814.9,470.7 804.9,468.2" fill="#1f1f1f" stroke="#1f1f1f" stroke-width="0.6" stroke-linejoin="round" /><polygon points="803.9,405.1 811.3,406.6 803.1,466.4 796.3,464.7" fill="#2a2a2a" stroke="#2a2a2a" stroke-width="0.6" stroke-linejoin="round" /><polygon points="815.2,407.3 822.7,408.9 813.6,469.0 806.7,467.3" fill="#2a2a2a" stroke="#2a2a2a" stroke-width="0.6" stroke-linejoin="round" /><polygon points="806.5,435.3 808.1,435.7 807.4,441.4 805.8,441.0" fill="#050505" stroke="#050505" stroke-width="0.6" stroke-linejoin="round" /><polygon points="808.7,380.2 834.8,384.9 828.4,402.7 800.4,397.3" fill="#3b3b3b" stroke="#3b3b3b" stroke-width="0.6" stroke-linejoin="round" /><polygon points="834.5,479.0 861.5,485.8 878.0,412.3 847.8,406.5" fill="#313131" stroke="#313131" stroke-width="0.6" stroke-linejoin="round" /><polygon points="849.7,412.6 861.3,414.9 848.3,479.0 837.8,476.4" fill="#1f1f1f" stroke="#1f1f1f" stroke-width="0.6" stroke-linejoin="round" /><polygon points="861.9,415.0 873.7,417.4 859.5,481.8 848.8,479.1" fill="#1f1f1f" stroke="#1f1f1f" stroke-width="0.6" stroke-linejoin="round" /><polygon points="851.2,414.5 859.2,416.1 846.9,477.3 839.6,475.5" fill="#2a2a2a" stroke="#2a2a2a" stroke-width="0.6" stroke-linejoin="round" /><polygon points="863.4,417.0 871.5,418.6 858.1,480.0 850.7,478.2" fill="#2a2a2a" stroke="#2a2a2a" stroke-width="0.6" stroke-linejoin="round" /><polygon points="852.4,445.6 854.1,445.9 852.9,451.7 851.2,451.4" fill="#050505" stroke="#050505" stroke-width="0.6" stroke-linejoin="round" /><polygon points="853.0,388.2 880.9,393.2 878.0,412.3 847.8,406.5" fill="#3b3b3b" stroke="#3b3b3b" stroke-width="0.6" stroke-linejoin="round" /><polygon points="626.1,286.1 624.2,289.4 620.4,289.4 618.5,286.1 620.4,282.8 624.2,282.8" fill="#2dbd72" stroke="#2dbd72" stroke-width="1.2" stroke-linejoin="round"/><polygon points="650.1,289.0 648.1,292.4 644.2,292.4 642.3,289.0 644.2,285.7 648.1,285.7" fill="#2dbd72" stroke="#2dbd72" stroke-width="1.2" stroke-linejoin="round"/><polygon points="675.1,292.1 673.1,295.6 669.1,295.6 667.1,292.1 669.1,288.7 673.1,288.7" fill="#2dbd72" stroke="#2dbd72" stroke-width="1.2" stroke-linejoin="round"/><polygon points="701.2,295.4 699.2,298.9 695.1,298.9 693.1,295.4 695.1,291.8 699.2,291.8" fill="#2dbd72" stroke="#2dbd72" stroke-width="1.2" stroke-linejoin="round"/><polygon points="601.8,296.8 599.7,300.4 595.6,300.4 593.5,296.8 595.6,293.2 599.7,293.2" fill="#2dbd72" stroke="#2dbd72" stroke-width="1.2" stroke-linejoin="round"/><polygon points="728.6,298.7 726.5,302.3 722.3,302.3 720.2,298.7 722.3,295.1 726.5,295.1" fill="#2dbd72" stroke="#2dbd72" stroke-width="1.2" stroke-linejoin="round"/><polygon points="627.2,300.3 625.1,303.9 620.8,303.9 618.7,300.3 620.8,296.6 625.1,296.6" fill="#2dbd72" stroke="#2dbd72" stroke-width="1.2" stroke-linejoin="round"/><polygon points="757.2,302.3 755.1,306.0 750.8,306.0 748.7,302.3 750.8,298.6 755.1,298.6" fill="#2dbd72" stroke="#2dbd72" stroke-width="1.2" stroke-linejoin="round"/><polygon points="653.8,303.9 651.6,307.6 647.3,307.6 645.2,303.9 647.3,300.1 651.6,300.1" fill="#2dbd72" stroke="#2dbd72" stroke-width="1.2" stroke-linejoin="round"/><polygon points="787.3,306.0 785.1,309.8 780.8,309.8 778.6,306.0 780.8,302.2 785.1,302.2" fill="#2dbd72" stroke="#2dbd72" stroke-width="1.2" stroke-linejoin="round"/><polygon points="681.8,307.7 679.6,311.5 675.1,311.5 672.9,307.7 675.1,303.9 679.6,303.9" fill="#2dbd72" stroke="#2dbd72" stroke-width="1.2" stroke-linejoin="round"/><polygon points="818.9,309.9 816.6,313.8 812.2,313.8 809.9,309.9 812.2,306.0 816.6,306.0" fill="#2dbd72" stroke="#2dbd72" stroke-width="1.2" stroke-linejoin="round"/><polygon points="572.9,309.5 570.7,313.3 566.2,313.3 563.9,309.5 566.2,305.6 570.7,305.6" fill="#2dbd72" stroke="#2dbd72" stroke-width="1.2" stroke-linejoin="round"/><polygon points="711.2,311.7 708.9,315.6 704.3,315.6 702.1,311.7 704.3,307.8 708.9,307.8" fill="#2dbd72" stroke="#2dbd72" stroke-width="1.2" stroke-linejoin="round"/><polygon points="852.1,314.0 849.8,318.0 845.2,318.0 842.9,314.0 845.2,310.0 849.8,310.0" fill="#2dbd72" stroke="#2dbd72" stroke-width="1.2" stroke-linejoin="round"/><polygon points="600.0,313.6 597.7,317.6 593.1,317.6 590.8,313.6 593.1,309.6 597.7,309.6" fill="#2dbd72" stroke="#2dbd72" stroke-width="1.2" stroke-linejoin="round"/><polygon points="742.1,315.9 739.8,320.0 735.1,320.0 732.8,315.9 735.1,311.9 739.8,311.9" fill="#2dbd72" stroke="#2dbd72" stroke-width="1.2" stroke-linejoin="round"/><polygon points="887.0,318.3 884.7,322.4 880.0,322.4 877.6,318.3 880.0,314.2 884.7,314.2" fill="#2dbd72" stroke="#2dbd72" stroke-width="1.2" stroke-linejoin="round"/><polygon points="628.5,317.9 626.1,322.0 621.4,322.0 619.0,317.9 621.4,313.8 626.1,313.8" fill="#2dbd72" stroke="#2dbd72" stroke-width="1.2" stroke-linejoin="round"/><polygon points="774.7,320.4 772.3,324.5 767.5,324.5 765.1,320.4 767.5,316.2 772.3,316.2" fill="#2dbd72" stroke="#2dbd72" stroke-width="1.2" stroke-linejoin="round"/><polygon points="658.5,322.5 656.1,326.7 651.2,326.7 648.8,322.5 651.2,318.3 656.1,318.3" fill="#2dbd72" stroke="#2dbd72" stroke-width="1.2" stroke-linejoin="round"/><polygon points="809.1,325.1 806.6,329.3 801.7,329.3 799.2,325.1 801.7,320.8 806.6,320.8" fill="#2dbd72" stroke="#2dbd72" stroke-width="1.2" stroke-linejoin="round"/><polygon points="538.3,324.7 535.9,328.9 530.9,328.9 528.4,324.7 530.9,320.4 535.9,320.4" fill="#2dbd72" stroke="#2dbd72" stroke-width="1.2" stroke-linejoin="round"/><polygon points="690.2,327.3 687.7,331.6 682.7,331.6 680.2,327.3 682.7,323.0 687.7,323.0" fill="#2dbd72" stroke="#2dbd72" stroke-width="1.2" stroke-linejoin="round"/><polygon points="845.4,330.0 842.9,334.4 837.8,334.4 835.3,330.0 837.8,325.6 842.9,325.6" fill="#2dbd72" stroke="#2dbd72" stroke-width="1.2" stroke-linejoin="round"/><polygon points="567.2,329.6 564.6,334.0 559.5,334.0 557.0,329.6 559.5,325.2 564.6,325.2" fill="#2dbd72" stroke="#2dbd72" stroke-width="1.2" stroke-linejoin="round"/><polygon points="723.8,332.4 721.2,336.9 716.1,336.9 713.5,332.4 716.1,327.9 721.2,327.9" fill="#2dbd72" stroke="#2dbd72" stroke-width="1.2" stroke-linejoin="round"/><polygon points="883.8,335.2 881.2,339.8 876.0,339.8 873.4,335.2 876.0,330.7 881.2,330.7" fill="#2dbd72" stroke="#2dbd72" stroke-width="1.2" stroke-linejoin="round"/><polygon points="597.7,334.9 595.1,339.4 589.9,339.4 587.2,334.9 589.9,330.4 595.1,330.4" fill="#2dbd72" stroke="#2dbd72" stroke-width="1.2" stroke-linejoin="round"/><polygon points="759.3,337.8 756.7,342.4 751.4,342.4 748.7,337.8 751.4,333.2 756.7,333.2" fill="#2dbd72" stroke="#2dbd72" stroke-width="1.2" stroke-linejoin="round"/><polygon points="630.1,340.5 627.4,345.2 622.0,345.2 619.3,340.5 622.0,335.8 627.4,335.8" fill="#2dbd72" stroke="#2dbd72" stroke-width="1.2" stroke-linejoin="round"/><polygon points="797.0,343.6 794.3,348.3 788.9,348.3 786.1,343.6 788.9,338.8 794.3,338.8" fill="#2dbd72" stroke="#2dbd72" stroke-width="1.2" stroke-linejoin="round"/><polygon points="664.5,346.4 661.8,351.2 656.2,351.2 653.4,346.4 656.2,341.6 661.8,341.6" fill="#2dbd72" stroke="#2dbd72" stroke-width="1.2" stroke-linejoin="round"/><polygon points="837.2,349.7 834.3,354.6 828.7,354.6 825.9,349.7 828.7,344.8 834.3,344.8" fill="#2dbd72" stroke="#2dbd72" stroke-width="1.2" stroke-linejoin="round"/><polygon points="701.2,352.7 698.3,357.7 692.6,357.7 689.7,352.7 692.6,347.8 698.3,347.8" fill="#2dbd72" stroke="#2dbd72" stroke-width="1.2" stroke-linejoin="round"/><polygon points="879.9,356.2 877.0,361.2 871.2,361.2 868.3,356.2 871.2,351.1 877.0,351.1" fill="#2dbd72" stroke="#2dbd72" stroke-width="1.2" stroke-linejoin="round"/><polygon points="740.3,359.5 737.3,364.6 731.4,364.6 728.4,359.5 731.4,354.3 737.3,354.3" fill="#2dbd72" stroke="#2dbd72" stroke-width="1.2" stroke-linejoin="round"/><polygon points="782.1,366.7 779.0,372.0 772.8,372.0 769.8,366.7 772.8,361.4 779.0,361.4" fill="#2dbd72" stroke="#2dbd72" stroke-width="1.2" stroke-linejoin="round"/><polygon points="826.8,374.4 823.6,379.9 817.3,379.9 814.1,374.4 817.3,368.9 823.6,368.9" fill="#2dbd72" stroke="#2dbd72" stroke-width="1.2" stroke-linejoin="round"/><polygon points="874.9,382.7 871.6,388.4 865.0,388.4 861.7,382.7 865.0,377.0 871.6,377.0" fill="#2dbd72" stroke="#2dbd72" stroke-width="1.2" stroke-linejoin="round"/></svg></div>
<div id="rtab" style="position:absolute;left:1267px;top:473px;width:10px;height:200px;background:#fff;border-radius:3px 0 0 0"></div>
<div id="legend">
 <div class="dot" style="left:16px;background:#f05a57"></div><div class="lg" style="left:36px">紧急</div>
 <div class="dot" style="left:68px;background:#f0d31b"></div><div class="lg" style="left:88px">警告</div>
 <div class="dot" style="left:120px;background:#2bbd73"></div><div class="lg" style="left:140px">正常</div>
 <div class="dot" style="left:172px;background:#dcdcd6"></div><div class="lg" style="left:192px">未知</div>
 <div class="dot" style="left:224px;background:#a9a9a9"></div><div class="lg" style="left:244px">离线</div>
</div>
<div id="panel">
<table>
<colgroup><col style="width:116px"><col style="width:116px"><col style="width:116px"></colgroup>
<tr><th style="font-family:'Liberation Sans',sans-serif">告警名称</th><th>IP</th><th style="font-family:'Liberation Sans',sans-serif">发生时间</th></tr>
<tr><td class="l">服务器风扇转速异常</td><td>100.2.74.34</td><td>2022-06-21 09:12:33</td></tr>
<tr><td class="l">服务器风扇转速异常</td><td>100.2.74.34</td><td>2022-06-21 09:12:33</td></tr>
<tr><td class="l">服务器风扇转速异常</td><td>100.2.74.34</td><td>2022-06-21 09:12:33</td></tr>
<tr><td class="l">服务器风扇转速异常</td><td>100.2.74.34</td><td>2022-06-21 09:12:33</td></tr>
<tr><td class="l">服务器风扇转速异常</td><td>100.2.74.34</td><td>2022-06-21 09:12:33</td></tr>
<tr><td class="l">服务器风扇转速异常</td><td>100.2.74.34</td><td>2022-06-21 09:12:33</td></tr>
<tr><td class="l">服务器风扇转速异常</td><td>100.2.74.34</td><td>2022-06-21 09:12:33</td></tr>
<tr><td class="l">服务器风扇转速异常</td><td>100.2.74.34</td><td>2022-06-21 09:12:33</td></tr>
<tr><td class="l">服务器通信协议异常</td><td>100.2.74.32</td><td>2022-06-21 10:12:33</td></tr>
<tr><td class="l">服务器网络通信异常</td><td>100.2.74.32</td><td>2022-06-21 04:12:33</td></tr>
</table>
<div id="pager">
 <span style="position:absolute;left:0;top:4px">共 14</span>
 <span style="position:absolute;left:263px;top:3px;color:#bfbfbf">‹</span>
 <div style="position:absolute;left:276px;top:0;width:24px;height:24px;border:1px solid #1677ff;border-radius:3px;color:#1677ff;text-align:center;line-height:22px">1</div>
 <span style="position:absolute;left:309px;top:4px">2</span>
 <span style="position:absolute;left:333px;top:3px">›</span>
</div>
</div>
</body></html>
